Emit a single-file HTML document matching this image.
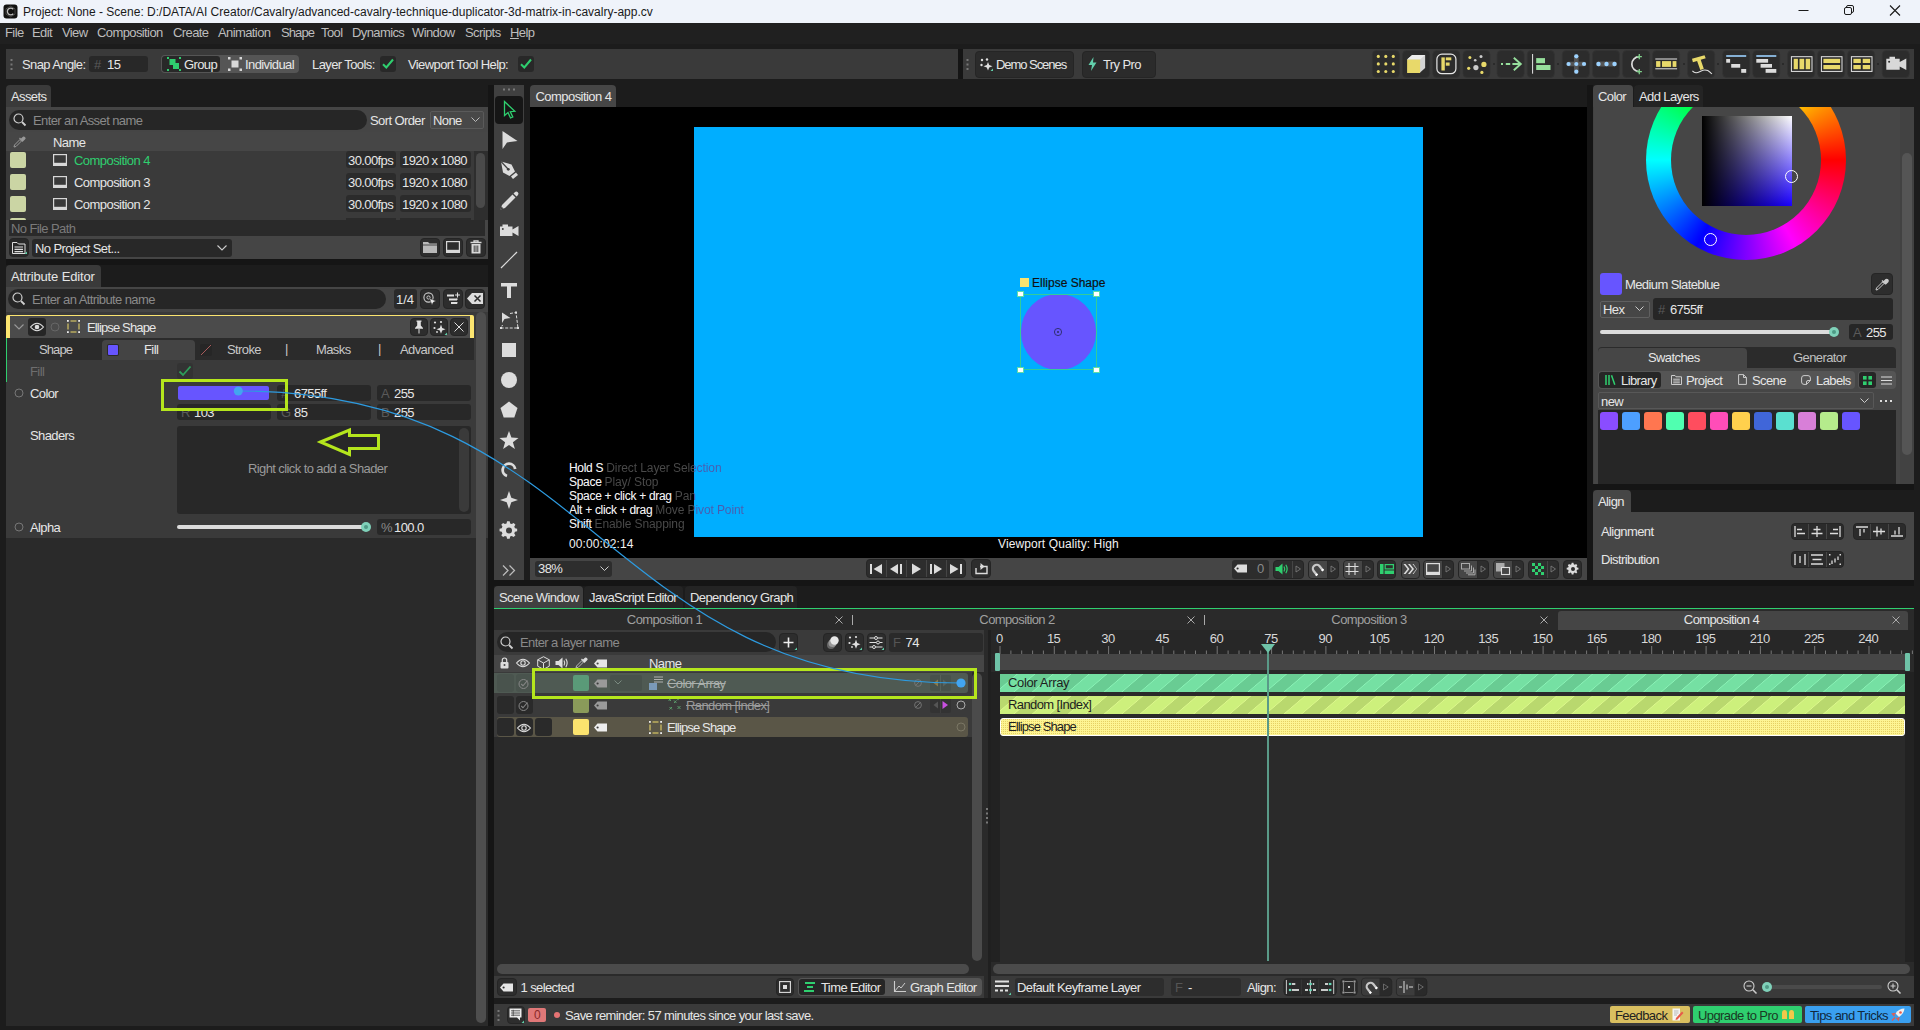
<!DOCTYPE html>
<html><head><meta charset="utf-8"><title>Cavalry</title>
<style>
*{box-sizing:border-box;margin:0;padding:0}
html,body{width:1920px;height:1030px;overflow:hidden;background:#1c1c1c}
body{font-family:"Liberation Sans",sans-serif;font-size:13px;letter-spacing:-0.6px;color:#e6e6e6;position:relative}
#app{position:absolute;left:0;top:0;width:1920px;height:1030px;overflow:hidden;background:#1c1c1c}
.a{position:absolute}
.t{position:absolute;white-space:nowrap;line-height:16px;height:16px;margin-top:1px}
.dim{color:#8a8a8a}
.grn{color:#2fcf6f}
.tab{position:absolute;background:#3a3a3a;border-radius:4px 4px 0 0;height:22px}
.tabi{position:absolute;background:#282828;border-radius:4px 4px 0 0;height:22px}
.fld{position:absolute;background:#282828;border-radius:3px}
.btn{position:absolute;background:#2b2b2b;border-radius:4px;border:1px solid #252525}
svg{position:absolute;overflow:visible}
</style></head><body><div id="app">
<div class="a" style="left:0;top:0;width:1920px;height:23px;background:#eff3fa"></div>
<svg style="left:3px;top:4px" width="15" height="15" viewBox="0 0 15 15"><rect x="0.5" y="0.5" width="14" height="14" rx="3" fill="#111"/><path d="M10.3 5.2 A3.4 3.4 0 1 0 10.3 9.8" fill="none" stroke="#bbb" stroke-width="1.3"/><path d="M7.5 2.2 L12 4.8 V10.2 L7.5 12.8 L3 10.2 V4.8 Z" fill="none" stroke="#666" stroke-width="0.6"/></svg>
<div class="t" style="left:23px;top:3px;font-size:12px;letter-spacing:0;color:#1a1a1a">Project: None - Scene: D:/DATA/AI Creator/Cavalry/advanced-cavalry-technique-duplicator-3d-matrix-in-cavalry-app.cv</div>
<svg style="left:1798px;top:5px" width="110" height="12" viewBox="0 0 110 12"><path d="M0.5 5.5 H10.5" stroke="#1a1a1a" stroke-width="1" fill="none"/><rect x="46.5" y="2.5" width="7" height="7" rx="1.5" fill="none" stroke="#1a1a1a"/><path d="M48.5 2.5 V2 Q48.5 0.5 50 0.5 H54 Q55.5 0.5 55.5 2 V6 Q55.5 7.5 54 7.5 H53.5" fill="none" stroke="#1a1a1a"/><path d="M92 0.5 L102 10.5 M102 0.5 L92 10.5" stroke="#1a1a1a" stroke-width="1.1" fill="none"/></svg>
<div class="a" style="left:488px;top:85px;width:6px;height:941px;background:#151515"></div>
<div class="a" style="left:1587px;top:85px;width:6px;height:495px;background:#151515"></div>
<div class="a" style="left:958px;top:49px;width:5px;height:30px;background:#151515"></div>
<div class="a" style="left:6px;top:259px;width:482px;height:6px;background:#151515"></div>
<div class="a" style="left:494px;top:580px;width:1420px;height:6px;background:#151515"></div>
<div class="a" style="left:1593px;top:484px;width:321px;height:6px;background:#151515"></div>

<div class="a" style="left:0;top:23px;width:1920px;height:21px;background:#202020"></div>
<div class="t" style="left:5px;top:24px;color:#bdbdbd">File</div>
<div class="t" style="left:32px;top:24px;color:#bdbdbd">Edit</div>
<div class="t" style="left:62px;top:24px;color:#bdbdbd">View</div>
<div class="t" style="left:97px;top:24px;color:#bdbdbd">Composition</div>
<div class="t" style="left:173px;top:24px;color:#bdbdbd">Create</div>
<div class="t" style="left:218px;top:24px;color:#bdbdbd">Animation</div>
<div class="t" style="left:281px;top:24px;color:#bdbdbd;letter-spacing:-0.9px">Shape</div>
<div class="t" style="left:321px;top:24px;color:#bdbdbd">Tool</div>
<div class="t" style="left:352px;top:24px;color:#bdbdbd">Dynamics</div>
<div class="t" style="left:412px;top:24px;color:#bdbdbd">Window</div>
<div class="t" style="left:465px;top:24px;color:#bdbdbd">Scripts</div>
<div class="t" style="left:510px;top:24px;color:#bdbdbd"><span style="text-decoration:underline">H</span>elp</div>

<div class="a" style="left:6px;top:49px;width:952px;height:30px;background:#3a3a3a"></div>
<div class="a" style="left:963px;top:49px;width:951px;height:30px;background:#3a3a3a"></div>
<svg style="left:10px;top:58px" width="3" height="13" viewBox="0 0 3 13"><g fill="#777"><rect x="0.5" y="1" width="2" height="2"/><rect x="0.5" y="5.5" width="2" height="2"/><rect x="0.5" y="10" width="2" height="2"/></g></svg>
<svg style="left:966px;top:58px" width="3" height="13" viewBox="0 0 3 13"><g fill="#777"><rect x="0.5" y="1" width="2" height="2"/><rect x="0.5" y="5.5" width="2" height="2"/><rect x="0.5" y="10" width="2" height="2"/></g></svg>
<div class="t" style="left:22px;top:56px">Snap Angle:</div>
<div class="fld" style="left:89px;top:56px;width:59px;height:16px"></div>
<div class="t dim" style="left:94px;top:56px;color:#5a5a5a">#</div><div class="t" style="left:107px;top:56px">15</div>
<div class="a" style="left:161px;top:55px;width:138px;height:18px;background:#555;border-radius:4px"></div>
<div class="a" style="left:162px;top:56px;width:58px;height:16px;background:#282828;border-radius:3px"></div>
<svg style="left:167px;top:57px" width="14" height="14" viewBox="0 0 14 14"><g fill="#2fcf6f"><rect x="0" y="0" width="2" height="2"/><rect x="12" y="0" width="2" height="2"/><rect x="0" y="12" width="2" height="2"/><rect x="12" y="12" width="2" height="2"/><rect x="2.5" y="2" width="6" height="6"/><rect x="6" y="6" width="6" height="6"/></g></svg>
<div class="t" style="left:184px;top:56px">Group</div>
<svg style="left:228px;top:57px" width="14" height="14" viewBox="0 0 14 14"><g fill="#d8d8d8"><rect x="0" y="0" width="2.5" height="2.5"/><rect x="11.5" y="0" width="2.5" height="2.5"/><rect x="0" y="11.5" width="2.5" height="2.5"/><rect x="11.5" y="11.5" width="2.5" height="2.5"/><rect x="3.5" y="3.5" width="7" height="7"/></g></svg>
<div class="t" style="left:245px;top:56px">Individual</div>
<div class="t" style="left:312px;top:56px">Layer Tools:</div>
<div class="fld" style="left:380px;top:56px;width:16px;height:16px"></div><svg style="left:380px;top:56px" width="16" height="16" viewBox="0 0 16 16"><path d="M3 8.2 L6.3 11.5 L13 3.5" fill="none" stroke="#2fcf6f" stroke-width="2"/></svg>
<div class="t" style="left:408px;top:56px">Viewport Tool Help:</div>
<div class="fld" style="left:518px;top:56px;width:16px;height:16px"></div><svg style="left:518px;top:56px" width="16" height="16" viewBox="0 0 16 16"><path d="M3 8.2 L6.3 11.5 L13 3.5" fill="none" stroke="#2fcf6f" stroke-width="2"/></svg>
<div class="btn" style="left:975px;top:50.5px;width:99px;height:27px"></div>
<svg style="left:980px;top:58px" width="13" height="13" viewBox="0 0 13 13"><g fill="#e0e0e0"><circle cx="2" cy="2" r="1.2"/><circle cx="7" cy="1.5" r="1.2"/><circle cx="1.5" cy="7" r="1.2"/><path d="M8 4 L9.2 7 L12.5 8.2 L9.2 9.4 L8 12.5 L6.8 9.4 L3.5 8.2 L6.8 7 Z"/></g><path d="M13 13 L10.5 13 L13 10.5Z" fill="#62d0ac"/></svg>
<div class="t" style="left:996px;top:56px;letter-spacing:-1.05px">Demo Scenes</div>
<div class="btn" style="left:1081.5px;top:50.5px;width:74px;height:27px"></div>
<svg style="left:1088px;top:57px" width="9" height="14" viewBox="0 0 9 14"><path d="M5.5 0 L0.5 8 H4 L3 14 L8.5 5.5 H5 Z" fill="#62d0ac"/></svg>
<div class="t" style="left:1103px;top:56px">Try Pro</div>
<div class="a" style="left:1492.5px;top:63px;width:2px;height:2px;background:#2a2a2a"></div>
<div class="a" style="left:1557px;top:63px;width:2px;height:2px;background:#2a2a2a"></div>
<div class="a" style="left:1682.5px;top:63px;width:2px;height:2px;background:#2a2a2a"></div>
<div class="a" style="left:1717px;top:63px;width:2px;height:2px;background:#2a2a2a"></div>
<div class="a" style="left:1782px;top:63px;width:2px;height:2px;background:#2a2a2a"></div>
<div class="a" style="left:1877px;top:63px;width:2px;height:2px;background:#2a2a2a"></div>
<svg style="left:0;top:0" width="1920" height="90" viewBox="0 0 1920 90"><g transform="translate(1372.4 50.5)"><rect x="0" y="0" width="27" height="27" rx="4" fill="#2c2c2c" stroke="#343434" stroke-width="0.8"/><g fill="#e8d96a"><circle cx="5.9" cy="5.9" r="1.55"/><circle cx="5.9" cy="13.4" r="1.55"/><circle cx="5.9" cy="21.0" r="1.55"/><circle cx="13.4" cy="5.9" r="1.55"/><circle cx="13.4" cy="13.4" r="1.55"/><circle cx="13.4" cy="21.0" r="1.55"/><circle cx="20.9" cy="5.9" r="1.55"/><circle cx="20.9" cy="13.4" r="1.55"/><circle cx="20.9" cy="21.0" r="1.55"/></g></g><g transform="translate(1402.6 50.5)"><rect x="0" y="0" width="27" height="27" rx="4" fill="#2c2c2c" stroke="#343434" stroke-width="0.8"/><path d="M4.5 9.100000000000001 l5 -4.7 h13 v13 l-5 4.7 Z" fill="#d4d4d4"/><path d="M4.5 9.100000000000001 l5 -4.7 h13 l-5 4.7 Z" fill="#ececec"/><rect x="4.5" y="9.100000000000001" width="13" height="13.4" fill="#e8d96a"/></g><g transform="translate(1432.8 50.5)"><rect x="0" y="0" width="27" height="27" rx="4" fill="#2c2c2c" stroke="#343434" stroke-width="0.8"/><rect x="4.1" y="3.6" width="19" height="19.6" rx="5" fill="none" stroke="#e6e6e6" stroke-width="1.2"/><rect x="8.6" y="6.9" width="3.4" height="13.1" fill="#e8d96a"/><rect x="13.0" y="6.9" width="5.5" height="2.9" fill="#e8d96a"/><rect x="13.0" y="12" width="3.8" height="3.2" fill="#e8d96a"/></g><g transform="translate(1463 50.5)"><rect x="0" y="0" width="27" height="27" rx="4" fill="#2c2c2c" stroke="#343434" stroke-width="0.8"/><circle cx="6.9" cy="6.9" r="1.5" fill="#e8d96a"/><circle cx="18.0" cy="5.9" r="1.5" fill="#ccc"/><circle cx="12.2" cy="9.8" r="1.3" fill="#ccc"/><circle cx="20.9" cy="13.9" r="2.6" fill="#e8d96a"/><circle cx="12.9" cy="17.1" r="2.6" fill="#ccc"/><circle cx="5.7" cy="17.8" r="1.6" fill="#e8d96a"/><circle cx="18.9" cy="21.9" r="1.6" fill="#e8d96a"/></g><g transform="translate(1497.1 50.5)"><rect x="0" y="0" width="27" height="27" rx="4" fill="#2c2c2c" stroke="#343434" stroke-width="0.8"/><path d="M3.9 13.5 h2 M8.7 13.5 h4.4 M15.3 13.5 H23.2" stroke="#96df9c" stroke-width="1.9" fill="none"/><path d="M16.7 7.3 L23.7 13.5 L16.7 19.7" fill="none" stroke="#96df9c" stroke-width="1.9"/></g><g transform="translate(1527.3 50.5)"><rect x="0" y="0" width="27" height="27" rx="4" fill="#2c2c2c" stroke="#343434" stroke-width="0.8"/><path d="M5.3 3.5 V23.2" stroke="#e6e6e6" stroke-width="1"/><rect x="8.9" y="7.6" width="8.8" height="5.1" fill="#96df9c"/><rect x="8.9" y="14.5" width="14.3" height="5" fill="#96df9c"/></g><g transform="translate(1562.3 50.5)"><rect x="0" y="0" width="27" height="27" rx="4" fill="#2c2c2c" stroke="#343434" stroke-width="0.8"/><path d="M6.3 13.5 H21.7 M14 5.8 V21.2" stroke="#555" stroke-width="4.6" stroke-linecap="round"/><g fill="#9cd2ff"><circle cx="14" cy="13.5" r="2.1"/><circle cx="6.3" cy="13.5" r="2.1"/><circle cx="21.7" cy="13.5" r="2.1"/><circle cx="14" cy="5.8" r="2.1"/><circle cx="14" cy="21.2" r="2.1"/></g></g><g transform="translate(1592.5 50.5)"><rect x="0" y="0" width="27" height="27" rx="4" fill="#2c2c2c" stroke="#343434" stroke-width="0.8"/><path d="M6 13.5 H22" stroke="#555" stroke-width="4.8" stroke-linecap="round"/><g fill="#9cd2ff"><circle cx="6" cy="13.5" r="2.2"/><circle cx="14" cy="13.5" r="2.2"/><circle cx="22" cy="13.5" r="2.2"/></g></g><g transform="translate(1622.6 50.5)"><rect x="0" y="0" width="27" height="27" rx="4" fill="#2c2c2c" stroke="#343434" stroke-width="0.8"/><path d="M16.700000000000045 6.2 A7.45 7.45 0 0 0 16.700000000000045 21.1" fill="none" stroke="#dcdcdc" stroke-width="1.7"/><path d="M14.100000000000046 6.2 h5.2 M16.700000000000045 3.6 v5.2 M14.100000000000046 21.1 h5.2 M16.700000000000045 18.5 v5.2" stroke="#7fd08a" stroke-width="1.3"/></g><g transform="translate(1652.6 50.5)"><rect x="0" y="0" width="27" height="27" rx="4" fill="#2c2c2c" stroke="#343434" stroke-width="0.8"/><path d="M2.7 8.5 H24.5 M2.7 18.3 H24.5" stroke="#e6e6e6" stroke-width="1"/><rect x="3.5" y="10.6" width="4.3" height="5.8" fill="#e8d96a"/><rect x="9.4" y="10.6" width="9.1" height="5.8" fill="#e8d96a"/><rect x="20.0" y="10.6" width="3.8" height="5.8" fill="#e8d96a"/></g><g transform="translate(1687.6 50.5)"><rect x="0" y="0" width="27" height="27" rx="4" fill="#2c2c2c" stroke="#343434" stroke-width="0.8"/><path d="M4.4 8.2 L16.9 4.7 L18.1 7.8 L13.1 9.3 L16.2 18.2 L12.7 19.5 L9.5 10.4 L5.3 11.7 Z" fill="#e8d96a"/><path d="M4.8 20.3 C8.8 25.0 12.7 19.5 17.3 19.5 S22.0 21.8 24.4 23.4" fill="none" stroke="#e0e0e0" stroke-width="1.1"/></g><g transform="translate(1722.7 50.5)"><rect x="0" y="0" width="27" height="27" rx="4" fill="#2c2c2c" stroke="#343434" stroke-width="0.8"/><rect x="3.5" y="4.7" width="20" height="1.6" fill="#9cd2ff"/><rect x="3.5" y="8.5" width="3.9" height="3.7" fill="#dcdcdc"/><rect x="8.5" y="13.5" width="9" height="3.7" fill="#dcdcdc"/><rect x="18.5" y="18.5" width="5" height="3.8" fill="#dcdcdc"/></g><g transform="translate(1752.8 50.5)"><rect x="0" y="0" width="27" height="27" rx="4" fill="#2c2c2c" stroke="#343434" stroke-width="0.8"/><rect x="3.5" y="4.7" width="20" height="1.6" fill="#9cd2ff"/><rect x="3.5" y="8.5" width="11.8" height="3.7" fill="#dcdcdc"/><rect x="7.8" y="13.5" width="11.4" height="3.7" fill="#dcdcdc"/><rect x="12.8" y="18.5" width="10.7" height="3.8" fill="#dcdcdc"/></g><g transform="translate(1787.6 50.5)"><rect x="0" y="0" width="27" height="27" rx="4" fill="#2c2c2c" stroke="#343434" stroke-width="0.8"/><rect x="3.8" y="6.2" width="20.6" height="14.7" fill="none" stroke="#e6e6e6" stroke-width="1"/><rect x="6.1" y="8.3" width="4.2" height="10.4" fill="#e8d96a"/><rect x="11.9" y="8.3" width="4.7" height="10.4" fill="#e8d96a"/><rect x="18.1" y="8.3" width="4.4" height="10.4" fill="#e8d96a"/></g><g transform="translate(1817.6 50.5)"><rect x="0" y="0" width="27" height="27" rx="4" fill="#2c2c2c" stroke="#343434" stroke-width="0.8"/><rect x="3.8" y="6.2" width="20.6" height="14.7" fill="none" stroke="#e6e6e6" stroke-width="1"/><rect x="5.8" y="8.3" width="16.7" height="4.2" fill="#e8d96a"/><rect x="5.8" y="14.5" width="16.7" height="4.2" fill="#e8d96a"/></g><g transform="translate(1847.6 50.5)"><rect x="0" y="0" width="27" height="27" rx="4" fill="#2c2c2c" stroke="#343434" stroke-width="0.8"/><rect x="3.8" y="6.2" width="20.6" height="14.7" fill="none" stroke="#e6e6e6" stroke-width="1"/><rect x="5.8" y="8.3" width="7.4" height="4.2" fill="#e8d96a"/><rect x="5.8" y="14.5" width="7.4" height="4.2" fill="#e8d96a"/><rect x="15.1" y="8.3" width="7.4" height="4.2" fill="#e8d96a"/><rect x="15.1" y="14.5" width="7.4" height="4.2" fill="#e8d96a"/></g><g transform="translate(1882.3 50.5)"><rect x="0" y="0" width="27" height="27" rx="4" fill="#2c2c2c" stroke="#343434" stroke-width="0.8"/><path d="M4.0 8.3 H7.2 V6.2 H12.7 V8.3 H17.4 V11.5 L24.0 8 V19.5 L17.4 16 V19.2 H4.0 Z" fill="#d8d8d8"/><circle cx="6.8" cy="11.2" r="1" fill="#2d2d2d"/></g></svg>

<div class="tab" style="left:6px;top:85px;width:45px"></div><div class="t" style="left:11px;top:88px">Assets</div>
<div class="a" style="left:6px;top:107px;width:482px;height:152px;background:#454545"></div>
<div class="a" style="left:9px;top:110px;width:358px;height:20px;background:#262626;border-radius:10px"></div>
<svg style="left:13px;top:113px" width="13" height="13" viewBox="0 0 13 13"><circle cx="5.5" cy="5.5" r="4.5" fill="none" stroke="#d0d0d0" stroke-width="1.2"/><path d="M9 9 L12.5 12.5" stroke="#d0d0d0" stroke-width="1.8"/></svg>
<div class="t dim" style="left:33px;top:112px">Enter an Asset name</div>
<div class="t" style="left:370px;top:112px">Sort Order</div>
<div class="a" style="left:430px;top:111px;width:54px;height:18px;background:#484848;border:1px solid #5a5a5a;border-radius:2px"></div>
<div class="t" style="left:433px;top:112px">None</div>
<svg style="left:471px;top:117px" width="9" height="6" viewBox="0 0 9 6"><path d="M0.5 0.5 L4.5 4.5 L8.5 0.5" fill="none" stroke="#bbb" stroke-width="1"/></svg>
<div class="a" style="left:6px;top:132px;width:482px;height:19px;background:#464646"></div>
<svg style="left:13px;top:135px" width="13" height="13" viewBox="0 0 13 13"><path d="M1 12 L1.5 10 L7 4.5 L8.5 6 L3 11.5 Z" fill="none" stroke="#999" stroke-width="1"/><path d="M6.5 3 L10 6.5 M8 4.5 L10.5 2 A1.5 1.5 0 0 1 12 3.5 L9.5 6" fill="#999" stroke="#999" stroke-width="1.2"/></svg>
<div class="t" style="left:53px;top:134px">Name</div>
<div class="a" style="left:6px;top:151px;width:482px;height:69px;background:#3a3a3a"></div><div class="a" style="left:474px;top:151px;width:14px;height:69px;background:#2e2e2e"></div>
<div class="a" style="left:10px;top:152px;width:16px;height:16px;background:#cbd5a4;border-radius:2px"></div>
<svg style="left:53px;top:154px" width="14" height="12" viewBox="0 0 14 12"><rect x="0.6" y="0.6" width="12.8" height="8.8" fill="none" stroke="#d8d8d8" stroke-width="1.2"/><rect x="0" y="9.5" width="14" height="2.5" fill="#d8d8d8"/></svg>
<div class="t" style="left:74px;top:152px;color:#2fcf6f;letter-spacing:-0.55px">Composition 4</div>
<div class="fld" style="left:346px;top:151px;width:50px;height:17px;background:#2b2b2b"></div><div class="t" style="left:348px;top:152px">30.00fps</div>
<div class="fld" style="left:400px;top:151px;width:71px;height:17px;background:#2b2b2b"></div><div class="t" style="left:402px;top:152px">1920 x 1080</div>
<div class="a" style="left:10px;top:174px;width:16px;height:16px;background:#cbd5a4;border-radius:2px"></div>
<svg style="left:53px;top:176px" width="14" height="12" viewBox="0 0 14 12"><rect x="0.6" y="0.6" width="12.8" height="8.8" fill="none" stroke="#d8d8d8" stroke-width="1.2"/><rect x="0" y="9.5" width="14" height="2.5" fill="#d8d8d8"/></svg>
<div class="t" style="left:74px;top:174px;color:#e6e6e6;letter-spacing:-0.55px">Composition 3</div>
<div class="fld" style="left:346px;top:173px;width:50px;height:17px;background:#2b2b2b"></div><div class="t" style="left:348px;top:174px">30.00fps</div>
<div class="fld" style="left:400px;top:173px;width:71px;height:17px;background:#2b2b2b"></div><div class="t" style="left:402px;top:174px">1920 x 1080</div>
<div class="a" style="left:10px;top:196px;width:16px;height:16px;background:#cbd5a4;border-radius:2px"></div>
<svg style="left:53px;top:198px" width="14" height="12" viewBox="0 0 14 12"><rect x="0.6" y="0.6" width="12.8" height="8.8" fill="none" stroke="#d8d8d8" stroke-width="1.2"/><rect x="0" y="9.5" width="14" height="2.5" fill="#d8d8d8"/></svg>
<div class="t" style="left:74px;top:196px;color:#e6e6e6;letter-spacing:-0.55px">Composition 2</div>
<div class="fld" style="left:346px;top:195px;width:50px;height:17px;background:#2b2b2b"></div><div class="t" style="left:348px;top:196px">30.00fps</div>
<div class="fld" style="left:400px;top:195px;width:71px;height:17px;background:#2b2b2b"></div><div class="t" style="left:402px;top:196px">1920 x 1080</div>
<div class="a" style="left:10px;top:218px;width:16px;height:2px;background:#cbd5a4;border-radius:2px 2px 0 0"></div>
<div class="a" style="left:346px;top:218px;width:50px;height:2px;background:#2b2b2b"></div><div class="a" style="left:400px;top:218px;width:71px;height:2px;background:#2b2b2b"></div>
<div class="a" style="left:476px;top:153px;width:9px;height:55px;background:#4a4a4a;border-radius:5px"></div>
<div class="a" style="left:9px;top:220px;width:476px;height:16px;background:#2a2a2a"></div>
<div class="t" style="left:11px;top:220px;color:#7a7a7a">No File Path</div>
<div class="btn" style="left:9px;top:238px;width:20px;height:19px;background:#282828"></div>
<svg style="left:12px;top:241px" width="15" height="13" viewBox="0 0 15 13"><path d="M0.5 12.5 V1.5 H5 L6.5 3 H13 V12.5 Z" fill="none" stroke="#ddd" stroke-width="1"/><path d="M2.5 6 H11 M2.5 8.3 H11 M2.5 10.6 H11" stroke="#ddd" stroke-width="1.2"/><path d="M15 13 L12.5 13 L15 10.5Z" fill="#5fcfa8"/></svg>
<div class="fld" style="left:32px;top:239px;width:200px;height:18px"></div><div class="t" style="left:35px;top:240px">No Project Set...</div>
<svg style="left:217px;top:245px" width="10" height="6" viewBox="0 0 10 6"><path d="M0.5 0.5 L5 5 L9.5 0.5" fill="none" stroke="#ccc" stroke-width="1.1"/></svg>
<div class="btn" style="left:420px;top:238px;width:20px;height:19px;background:#2d2d2d"></div>
<div class="btn" style="left:443px;top:238px;width:20px;height:19px;background:#2d2d2d"></div>
<div class="btn" style="left:466px;top:238px;width:20px;height:19px;background:#2d2d2d"></div>
<svg style="left:423px;top:241px" width="14" height="12" viewBox="0 0 14 12"><path d="M0 12 V1 H5 L6.5 2.5 H14 V12 Z" fill="#b8b8b8"/><path d="M0 4 H14" stroke="#2d2d2d" stroke-width="0.8"/></svg>
<svg style="left:446px;top:241px" width="14" height="12" viewBox="0 0 14 12"><rect x="0.6" y="0.6" width="12.8" height="8.8" fill="none" stroke="#d8d8d8" stroke-width="1.2"/><rect x="0" y="9.5" width="14" height="2.5" fill="#d8d8d8"/></svg>
<svg style="left:470px;top:240px" width="12" height="14" viewBox="0 0 12 14"><path d="M0.5 2.5 H11.5 M4 2.5 V0.8 H8 V2.5" fill="none" stroke="#d8d8d8" stroke-width="1.3"/><path d="M1.5 4 H10.5 V13.5 H1.5 Z" fill="#d8d8d8"/><path d="M4.2 5.5 V12 M6 5.5 V12 M7.8 5.5 V12" stroke="#2d2d2d" stroke-width="0.9"/></svg>
<div class="tab" style="left:6px;top:265px;width:95px"></div><div class="t" style="left:11px;top:268px;letter-spacing:-0.14px">Attribute Editor</div>
<div class="a" style="left:6px;top:287px;width:482px;height:251px;background:#3a3a3a"></div><div class="a" style="left:6px;top:287px;width:482px;height:25px;background:#454545"></div>
<div class="a" style="left:6px;top:538px;width:482px;height:488px;background:#2a2a2a"></div>
<div class="a" style="left:8px;top:289px;width:378px;height:20px;background:#262626;border-radius:10px"></div>
<svg style="left:12px;top:292px" width="13" height="13" viewBox="0 0 13 13"><circle cx="5.5" cy="5.5" r="4.5" fill="none" stroke="#d0d0d0" stroke-width="1.2"/><path d="M9 9 L12.5 12.5" stroke="#d0d0d0" stroke-width="1.8"/></svg>
<div class="t dim" style="left:32px;top:291px">Enter an Attribute name</div>
<div class="fld" style="left:394px;top:289px;width:23px;height:20px;background:#2a2a2a"></div><div class="t" style="left:396px;top:291px;letter-spacing:0">1/4</div>
<div class="btn" style="left:420px;top:289px;width:20px;height:20px;background:#2d2d2d"></div>
<div class="btn" style="left:443px;top:289px;width:20px;height:20px;background:#2d2d2d"></div>
<div class="btn" style="left:465px;top:289px;width:20px;height:20px;background:#2d2d2d"></div>
<svg style="left:423px;top:292px" width="14" height="14" viewBox="0 0 14 14"><circle cx="5.5" cy="5.5" r="4.6" fill="none" stroke="#ccc" stroke-width="1.1"/><circle cx="5.5" cy="5.5" r="1.6" fill="none" stroke="#ccc" stroke-width="1"/><path d="M6.5 6.5 L13 9 L10.3 10.3 L9 13 Z" fill="#eee" stroke="#2d2d2d" stroke-width="0.5"/></svg>
<svg style="left:446px;top:292px" width="14" height="13" viewBox="0 0 14 13"><path d="M1 3.5 H8 M3 7.5 H11 M5 11 H11" stroke="#e0e0e0" stroke-width="1.8"/><path d="M11.5 0.5 V5.5 M9 3 H14" stroke="#e0e0e0" stroke-width="1.1"/><path d="M11 6.5 V8 M11 10 V11.5" stroke="#e0e0e0" stroke-width="1"/></svg>
<svg style="left:467px;top:293px" width="16" height="11" viewBox="0 0 16 11"><path d="M0 5.5 L5 0 H16 V11 H5 Z" fill="#ddd"/><path d="M7.5 2.5 L13.5 8.5 M13.5 2.5 L7.5 8.5" stroke="#2d2d2d" stroke-width="1.5"/></svg>
<div class="a" style="left:476px;top:312px;width:10px;height:711px;background:#4e4e4e;border-radius:5px"></div>
<div class="a" style="left:6px;top:315px;width:468px;height:23px;background:#4b4b4b;border-left:4px solid #fce570;border-right:4px solid #fce570;border-top:1px solid #fce570;border-radius:2px 2px 0 0"></div>
<svg style="left:14px;top:324px" width="10" height="6" viewBox="0 0 10 6"><path d="M0.5 0.5 L5 5 L9.5 0.5" fill="none" stroke="#999" stroke-width="1.1"/></svg>
<div class="a" style="left:28px;top:318px;width:18px;height:18px;background:#262626;border-radius:3px"></div>
<svg style="left:30px;top:322px" width="14" height="10" viewBox="0 0 14 10"><path d="M0.5 5 Q7 -2.5 13.5 5 Q7 12.5 0.5 5 Z" fill="none" stroke="#ddd" stroke-width="1.1"/><circle cx="7" cy="5" r="2.3" fill="#ddd"/></svg>
<svg style="left:50px;top:322px" width="10" height="10" viewBox="0 0 10 10"><circle cx="5" cy="5" r="4" fill="none" stroke="#666" stroke-width="1"/></svg>
<svg style="left:67px;top:320px" width="13" height="13" viewBox="0 0 13 13"><path d="M3.5 1 H9.5 M3.5 12 H9.5 M1 3.5 V9.5 M12 3.5 V9.5" stroke="#f0dc6a" stroke-width="1" fill="none"/><g fill="#ececec"><rect x="0" y="0" width="1.8" height="1.8"/><rect x="11.2" y="0" width="1.8" height="1.8"/><rect x="0" y="11.2" width="1.8" height="1.8"/><rect x="11.2" y="11.2" width="1.8" height="1.8"/></g></svg>
<div class="t" style="left:87px;top:319px;letter-spacing:-0.85px">Ellipse Shape</div>
<div class="btn" style="left:410px;top:318px;width:18px;height:18px;background:#2d2d2d"></div>
<div class="btn" style="left:430px;top:318px;width:18px;height:18px;background:#2d2d2d"></div>
<div class="btn" style="left:450px;top:318px;width:18px;height:18px;background:#2d2d2d"></div>
<svg style="left:414px;top:320px" width="10" height="14" viewBox="0 0 10 14"><path d="M2.5 0.5 H7.5 V1.8 H6.8 V5.5 L9 8 V8.8 H1 V8 L3.2 5.5 V1.8 H2.5 Z" fill="#e0e0e0"/><path d="M5 8.8 V13.5" stroke="#e0e0e0" stroke-width="1"/></svg>
<svg style="left:432px;top:320px" width="15" height="15" viewBox="0 0 15 15"><g fill="#e0e0e0"><circle cx="3" cy="2.5" r="1.1"/><circle cx="9" cy="2" r="1.1"/><circle cx="2.5" cy="8" r="1.1"/><circle cx="5" cy="12" r="0.9"/><path d="M9 4.5 L10.2 8 L13.5 9.2 L10.2 10.4 L9 13.8 L7.8 10.4 L4.5 9.2 L7.8 8 Z"/></g><path d="M15 15 L12.5 15 L15 12.5Z" fill="#5fcfa8"/></svg>
<svg style="left:454px;top:322px" width="10" height="10" viewBox="0 0 10 10"><path d="M0.5 0.5 L9.5 9.5 M9.5 0.5 L0.5 9.5" stroke="#ddd" stroke-width="1"/></svg>
<div class="a" style="left:6px;top:338px;width:468px;height:22px;background:#2b2b2b"></div>
<div class="a" style="left:6px;top:338px;width:1px;height:44px;background:#2fcf6f"></div>
<div class="a" style="left:102px;top:340px;width:93px;height:20px;background:#444;border-radius:4px 4px 0 0"></div>
<div class="t" style="left:39px;top:341px;color:#c8c8c8;letter-spacing:-0.9px">Shape</div>
<div class="a" style="left:107px;top:344px;width:12px;height:12px;background:#2a2a2a;border-radius:2px"></div><div class="a" style="left:108px;top:345px;width:10px;height:10px;background:#6755ff;border-radius:1px"></div>
<div class="t" style="left:144px;top:341px">Fill</div>
<div class="a" style="left:200px;top:344px;width:12px;height:12px;background:#262626;border-radius:2px"></div><svg style="left:200px;top:344px" width="12" height="12" viewBox="0 0 12 12"><path d="M1 11 L11 1" stroke="#a85a5a" stroke-width="1"/></svg>
<div class="t" style="left:227px;top:341px;color:#c8c8c8">Stroke</div>
<div class="t" style="left:285px;top:340px;color:#c8c8c8">|</div>
<div class="t" style="left:316px;top:341px;color:#c8c8c8">Masks</div>
<div class="t" style="left:378px;top:340px;color:#c8c8c8">|</div>
<div class="t" style="left:400px;top:341px;color:#c8c8c8">Advanced</div>
<div class="t" style="left:30px;top:363px;color:#6e6e6e">Fill</div>
<div class="fld" style="left:177px;top:363px;width:16px;height:16px;background:#333"></div><svg style="left:177px;top:363px" width="16" height="16" viewBox="0 0 16 16"><path d="M2.5 8.5 L6 12 L13.5 3.5" fill="none" stroke="#2e9e5a" stroke-width="1.8"/></svg>
<svg style="left:14px;top:388px" width="10" height="10" viewBox="0 0 10 10"><circle cx="5" cy="5" r="4" fill="none" stroke="#777" stroke-width="1"/></svg>
<div class="t" style="left:30px;top:385px">Color</div>
<div class="a" style="left:178px;top:386px;width:91px;height:14px;background:#6755ff;border-radius:2px"></div>
<div class="fld" style="left:277px;top:385px;width:94px;height:16px"></div><div class="t" style="left:281px;top:385px;color:#5a5a5a">#</div><div class="t" style="left:294px;top:385px">6755ff</div>
<div class="fld" style="left:377px;top:385px;width:94px;height:16px"></div><div class="t" style="left:381px;top:385px;color:#5a5a5a">A</div><div class="t" style="left:394px;top:385px">255</div>
<div class="fld" style="left:177px;top:404px;width:94px;height:16px"></div><div class="t" style="left:181px;top:404px;color:#5a5a5a">R</div><div class="t" style="left:194px;top:404px">103</div>
<div class="fld" style="left:277px;top:404px;width:94px;height:16px"></div><div class="t" style="left:281px;top:404px;color:#5a5a5a">G</div><div class="t" style="left:294px;top:404px">85</div>
<div class="fld" style="left:377px;top:404px;width:94px;height:16px"></div><div class="t" style="left:381px;top:404px;color:#5a5a5a">B</div><div class="t" style="left:394px;top:404px">255</div>
<div class="t" style="left:30px;top:427px">Shaders</div>
<div class="fld" style="left:177px;top:426px;width:294px;height:88px"></div>
<div class="a" style="left:459px;top:428px;width:10px;height:84px;background:#3a3a3a;border-radius:5px"></div>
<div class="t" style="left:248px;top:460px;color:#9a9a9a">Right click to add a Shader</div>
<svg style="left:14px;top:522px" width="10" height="10" viewBox="0 0 10 10"><circle cx="5" cy="5" r="4" fill="none" stroke="#777" stroke-width="1"/></svg>
<div class="t" style="left:30px;top:519px">Alpha</div>
<div class="a" style="left:177px;top:525px;width:189px;height:4px;background:#dcdcdc;border-radius:2px"></div>
<div class="a" style="left:361px;top:522px;width:10px;height:10px;background:#7fd1b9;border-radius:5px"></div><div class="a" style="left:364px;top:525px;width:4px;height:4px;background:#4f9a86;border-radius:2px"></div>
<div class="fld" style="left:377px;top:519px;width:94px;height:16px"></div><div class="t" style="left:381px;top:519px;color:#888">%</div><div class="t" style="left:394px;top:519px">100.0</div>

<div class="a" style="left:494px;top:85px;width:30px;height:495px;background:#404040"></div>
<svg style="left:502px;top:88px" width="14" height="3" viewBox="0 0 14 3"><g fill="#7a7a7a"><rect x="1" y="0.5" width="2" height="2"/><rect x="6" y="0.5" width="2" height="2"/><rect x="11" y="0.5" width="2" height="2"/></g></svg>
<div class="a" style="left:495px;top:96px;width:28px;height:28px;background:#161616;border-radius:4px"></div>
<svg style="left:499.0px;top:100.0px" width="20" height="20" viewBox="0 0 20 20"><path d="M5.5 1.5 V15.5 L9 12.5 L11.5 18 L13.8 17 L11.3 11.7 L15.8 11.3 Z" fill="none" stroke="#2fcf6f" stroke-width="1.3" stroke-linejoin="miter"/></svg>
<svg style="left:499.0px;top:130.0px" width="20" height="20" viewBox="0 0 20 20"><path d="M3.5 1 L18.5 11 L8 12.5 L3.5 19 Z" fill="#dcdcdc"/></svg>
<svg style="left:499.0px;top:160.0px" width="20" height="20" viewBox="0 0 20 20"><path d="M2 1.5 L12.5 4.5 L16 11.5 L10.5 16 L4 12.5 Z" fill="#dcdcdc"/><path d="M2 1.5 L9 9" stroke="#404040" stroke-width="1.2"/><circle cx="9.3" cy="9.3" r="1.4" fill="#404040"/><path d="M12 16.5 L17 12.5 L19 15 L14 19 Z" fill="#dcdcdc"/></svg>
<svg style="left:499.0px;top:190.0px" width="20" height="20" viewBox="0 0 20 20"><path d="M3 15 L13.5 4.5 L16.5 7.5 L6 18 L1.5 19.5 Z" fill="#dcdcdc"/><path d="M14.5 3.5 L15.8 2.2 A1.6 1.6 0 0 1 18.8 5.2 L17.5 6.5 Z" fill="#dcdcdc"/><path d="M1.5 19.5 L2.5 16.5 L4.5 18.5Z" fill="#404040"/></svg>
<svg style="left:499.0px;top:220.0px" width="20" height="20" viewBox="0 0 20 20"><path d="M1 6.5 H3.5 V4.5 H9 V6.5 H13.5 V9.5 L19.5 6 V16 L13.5 12.5 V16 H1 Z" fill="#dcdcdc"/><circle cx="3.8" cy="9" r="1" fill="#404040"/></svg>
<svg style="left:499.0px;top:250.0px" width="20" height="20" viewBox="0 0 20 20"><path d="M2 18 L18 2" stroke="#dcdcdc" stroke-width="1.2"/></svg>
<svg style="left:499.0px;top:280.0px" width="20" height="20" viewBox="0 0 20 20"><path d="M2 3 H18 V6.5 H12 V18 H8 V6.5 H2 Z" fill="#dcdcdc"/></svg>
<svg style="left:499.0px;top:310.0px" width="20" height="20" viewBox="0 0 20 20"><path d="M3 2.5 L11.5 8 L5.5 9 L3 13 Z" fill="#dcdcdc"/><path d="M11 3.5 L17 2.5 L19 18 L2 18 L3.5 15" fill="none" stroke="#dcdcdc" stroke-width="1" stroke-dasharray="3 1.5"/><g fill="#dcdcdc"><rect x="16" y="1.5" width="2" height="2"/><rect x="18" y="17" width="2" height="2"/><rect x="1" y="17" width="2" height="2"/></g></svg>
<svg style="left:499.0px;top:340.0px" width="20" height="20" viewBox="0 0 20 20"><rect x="3" y="3" width="14" height="14" fill="#dcdcdc"/></svg>
<svg style="left:499.0px;top:370.0px" width="20" height="20" viewBox="0 0 20 20"><circle cx="10" cy="10" r="8" fill="#dcdcdc"/></svg>
<svg style="left:499.0px;top:400.0px" width="20" height="20" viewBox="0 0 20 20"><path d="M10 1.5 L18.5 8 L15.3 17.5 H4.7 L1.5 8 Z" fill="#dcdcdc"/></svg>
<svg style="left:499.0px;top:430.0px" width="20" height="20" viewBox="0 0 20 20"><path d="M10 1 L12.4 7.6 L19.5 7.9 L13.9 12.3 L15.9 19 L10 15.1 L4.1 19 L6.1 12.3 L0.5 7.9 L7.6 7.6 Z" fill="#dcdcdc"/></svg>
<svg style="left:499.0px;top:460.0px" width="20" height="20" viewBox="0 0 20 20"><path d="M8 16 A6.3 6.3 0 1 1 16.2 9" fill="none" stroke="#dcdcdc" stroke-width="2.8"/></svg>
<svg style="left:499.0px;top:490.0px" width="20" height="20" viewBox="0 0 20 20"><path d="M10 1 L12.3 7.7 L19 10 L12.3 12.3 L10 19 L7.7 12.3 L1 10 L7.7 7.7 Z" fill="#dcdcdc"/></svg>
<svg style="left:499.0px;top:520.0px" width="20" height="20" viewBox="0 0 20 20"><path d="M10 1.5 l1.3 0 l.5 2.2 l1.6 .7 l1.9-1.2 l1.8 1.8 l-1.2 1.9 l.7 1.6 l2.2 .5 l0 2.6 l-2.2 .5 l-.7 1.6 l1.2 1.9 l-1.8 1.8 l-1.9-1.2 l-1.6 .7 l-.5 2.2 l-2.6 0 l-.5-2.2 l-1.6-.7 l-1.9 1.2 l-1.8-1.8 l1.2-1.9 l-.7-1.6 l-2.2-.5 l0-2.6 l2.2-.5 l.7-1.6 l-1.2-1.9 l1.8-1.8 l1.9 1.2 l1.6-.7 l.5-2.2 Z" fill="#dcdcdc" transform="translate(-0.65 -0.3)"/><circle cx="10" cy="10.5" r="3" fill="#404040"/></svg>
<svg style="left:502px;top:565px" width="14" height="11" viewBox="0 0 14 11"><path d="M1 0.5 L6 5.5 L1 10.5 M7.5 0.5 L12.5 5.5 L7.5 10.5" fill="none" stroke="#bdbdbd" stroke-width="1.2"/></svg>

<div class="tab" style="left:530px;top:85px;width:86px;background:#464646"></div><div class="t" style="left:535.5px;top:88px;letter-spacing:-0.55px">Composition 4</div>
<div class="a" style="left:530px;top:107px;width:1057px;height:451px;background:#000"></div>
<div class="a" style="left:693.5px;top:127px;width:729px;height:410px;background:#00aeff"></div>
<div class="a" style="left:1020.5px;top:294px;width:75.5px;height:75.5px;border-radius:50%;background:#6755ff"></div>
<div class="a" style="left:1020px;top:293.5px;width:76.5px;height:76.5px;border:1.3px solid #33cc99"></div>
<div class="a" style="left:1017px;top:290.7px;width:6.6px;height:6.6px;background:#fff;border:1px solid #5fdcaa"></div>
<div class="a" style="left:1093px;top:290.7px;width:6.6px;height:6.6px;background:#fff;border:1px solid #5fdcaa"></div>
<div class="a" style="left:1017px;top:366.7px;width:6.6px;height:6.6px;background:#fff;border:1px solid #5fdcaa"></div>
<div class="a" style="left:1093px;top:366.7px;width:6.6px;height:6.6px;background:#fff;border:1px solid #5fdcaa"></div>
<svg style="left:1053px;top:327px" width="10" height="10" viewBox="0 0 10 10"><circle cx="5" cy="5" r="3.6" fill="none" stroke="#2b2b66" stroke-width="0.9"/><circle cx="5" cy="5" r="1" fill="#2b2b66"/></svg>
<div class="a" style="left:1020px;top:278px;width:9px;height:9px;background:#fbe36e"></div>
<div class="t" style="left:1032px;top:274px;font-size:12px;letter-spacing:0;color:#111;-webkit-text-stroke:0.2px #111">Ellipse Shape</div>
<div class="t" style="left:569px;top:459px;font-size:12px;letter-spacing:-0.3px;color:#f2f2f2;background:linear-gradient(90deg,#4a4a4a 0,#4a4a4a 125px,#4a5cae 125px);-webkit-background-clip:text;background-clip:text"><span style="-webkit-text-fill-color:#f2f2f2">Hold S</span> <span style="-webkit-text-fill-color:transparent;letter-spacing:-0.1px">Direct Layer Selection</span></div>
<div class="t" style="left:569px;top:473px;font-size:12px;letter-spacing:-0.3px;color:#f2f2f2;background:linear-gradient(90deg,#4a4a4a 0,#4a4a4a 125px,#4a5cae 125px);-webkit-background-clip:text;background-clip:text"><span style="-webkit-text-fill-color:#f2f2f2">Space</span> <span style="-webkit-text-fill-color:transparent;letter-spacing:-0.1px">Play/ Stop</span></div>
<div class="t" style="left:569px;top:487px;font-size:12px;letter-spacing:-0.3px;color:#f2f2f2;background:linear-gradient(90deg,#4a4a4a 0,#4a4a4a 125px,#4a5cae 125px);-webkit-background-clip:text;background-clip:text"><span style="-webkit-text-fill-color:#f2f2f2">Space + click + drag</span> <span style="-webkit-text-fill-color:transparent;letter-spacing:-0.1px">Pan</span></div>
<div class="t" style="left:569px;top:501px;font-size:12px;letter-spacing:-0.3px;color:#f2f2f2;background:linear-gradient(90deg,#4a4a4a 0,#4a4a4a 125px,#4a5cae 125px);-webkit-background-clip:text;background-clip:text"><span style="-webkit-text-fill-color:#f2f2f2">Alt + click + drag</span> <span style="-webkit-text-fill-color:transparent;letter-spacing:-0.1px">Move Pivot Point</span></div>
<div class="t" style="left:569px;top:515px;font-size:12px;letter-spacing:-0.3px;color:#f2f2f2;background:linear-gradient(90deg,#4a4a4a 0,#4a4a4a 125px,#4a5cae 125px);-webkit-background-clip:text;background-clip:text"><span style="-webkit-text-fill-color:#f2f2f2">Shift</span> <span style="-webkit-text-fill-color:transparent;letter-spacing:-0.1px">Enable Snapping</span></div>
<div class="t" style="left:569px;top:535px;font-size:12px;letter-spacing:0.1px;color:#f2f2f2">00:00:02:14</div>
<div class="t" style="left:998px;top:535px;font-size:12px;letter-spacing:0.1px;color:#f2f2f2">Viewport Quality: High</div>
<div class="a" style="left:530px;top:558px;width:1057px;height:22px;background:#454545"></div>
<div class="fld" style="left:535px;top:561px;width:77px;height:16px;background:#2d2d2d"></div><div class="t" style="left:538px;top:560px">38%</div>
<svg style="left:600px;top:566px" width="9" height="6" viewBox="0 0 9 6"><path d="M0.5 0.5 L4.5 4.5 L8.5 0.5" fill="none" stroke="#ccc" stroke-width="1"/></svg>
<div class="a" style="left:866px;top:559px;width:100px;height:19px;background:#2d2d2d;border-radius:4px;border:1px solid #262626"></div>
<div class="a" style="left:886px;top:560px;width:1px;height:17px;background:#454545"></div>
<div class="a" style="left:906px;top:560px;width:1px;height:17px;background:#454545"></div>
<div class="a" style="left:926px;top:560px;width:1px;height:17px;background:#454545"></div>
<div class="a" style="left:946px;top:560px;width:1px;height:17px;background:#454545"></div>
<svg style="left:869.0px;top:562.5px" width="14" height="12" viewBox="0 0 14 12"><rect x="1" y="1" width="2" height="10" fill="#dcdcdc"/><path d="M13 1 V11 L4.5 6 Z" fill="#dcdcdc"/></svg>
<svg style="left:889.0px;top:562.5px" width="14" height="12" viewBox="0 0 14 12"><path d="M9 1 V11 L1 6 Z" fill="#dcdcdc"/><rect x="11" y="1" width="2" height="10" fill="#dcdcdc"/></svg>
<svg style="left:909.0px;top:562.5px" width="14" height="12" viewBox="0 0 14 12"><path d="M3 0.5 V11.5 L12 6 Z" fill="#dcdcdc"/></svg>
<svg style="left:929.0px;top:562.5px" width="14" height="12" viewBox="0 0 14 12"><rect x="1" y="1" width="2" height="10" fill="#dcdcdc"/><path d="M5 1 V11 L13 6 Z" fill="#dcdcdc"/></svg>
<svg style="left:949.0px;top:562.5px" width="14" height="12" viewBox="0 0 14 12"><path d="M1 1 V11 L9.5 6 Z" fill="#dcdcdc"/><rect x="11" y="1" width="2" height="10" fill="#dcdcdc"/></svg>
<div class="btn" style="left:971px;top:559px;width:20px;height:19px;background:#2d2d2d"></div>
<svg style="left:974.5px;top:562.5px" width="13" height="11" viewBox="0 0 13 11"><path d="M1 5 V10.5 H12 V3.5 H5" fill="none" stroke="#dcdcdc" stroke-width="1.4"/><path d="M7.5 0 V7 L3.5 3.5 Z" fill="#dcdcdc" transform="translate(2 0) scale(-1 1) translate(-11 0)"/></svg>
<div class="fld" style="left:1232px;top:559.5px;width:37px;height:19px;background:#2d2d2d"></div>
<svg style="left:1234px;top:564px" width="13" height="9" viewBox="0 0 13 9"><path d="M0 4.5 L3.5 0.5 H13 V8.5 H3.5 Z" fill="#dcdcdc"/><circle cx="3.6" cy="4.5" r="1.1" fill="#2d2d2d"/></svg>
<div class="t" style="left:1257px;top:560px;color:#8a8a8a">0</div>
<div class="btn" style="left:1272.5px;top:559.5px;width:31px;height:19px;background:#2d2d2d"></div>
<div class="a" style="left:1291.5px;top:560.5px;width:1px;height:17px;background:#454545"></div>
<svg style="left:1294.5px;top:565px" width="7" height="8" viewBox="0 0 7 8"><path d="M1 1 V7 L5.5 4 Z" fill="none" stroke="#808080" stroke-width="0.8"/></svg>
<svg style="left:1275.0px;top:563.0px" width="14" height="12" viewBox="0 0 14 12"><path d="M0.5 4 H3.5 L7.5 0.5 V11.5 L3.5 8 H0.5 Z" fill="#2fcf6f"/><path d="M9 3.5 Q10.5 6 9 8.5 M10.8 1.8 Q13.5 6 10.8 10.2" fill="none" stroke="#2fcf6f" stroke-width="1.2"/></svg>
<div class="btn" style="left:1307.5px;top:559.5px;width:31px;height:19px;background:#2d2d2d"></div>
<div class="a" style="left:1308.5px;top:560.5px;width:18px;height:17px;background:#464646;border-radius:3px 0 0 3px"></div><div class="a" style="left:1326.5px;top:560.5px;width:1px;height:17px;background:#2a2a2a"></div>
<svg style="left:1329.5px;top:565px" width="7" height="8" viewBox="0 0 7 8"><path d="M1 1 V7 L5.5 4 Z" fill="none" stroke="#808080" stroke-width="0.8"/></svg>
<svg style="left:1310.0px;top:563.0px" width="14" height="12" viewBox="0 0 14 12"><g transform="rotate(-38 7 6)"><path d="M3.2 11 V5.5 A3.8 3.8 0 0 1 10.8 5.5 V11" fill="none" stroke="#c8c8c8" stroke-width="2.3"/><path d="M2.05 9.3 h2.3 v1.9 h-2.3 Z M9.65 9.3 h2.3 v1.9 h-2.3 Z" fill="#fff"/></g></svg>
<div class="btn" style="left:1342.5px;top:559.5px;width:31px;height:19px;background:#2d2d2d"></div>
<div class="a" style="left:1343.5px;top:560.5px;width:18px;height:17px;background:#464646;border-radius:3px 0 0 3px"></div><div class="a" style="left:1361.5px;top:560.5px;width:1px;height:17px;background:#2a2a2a"></div>
<svg style="left:1364.5px;top:565px" width="7" height="8" viewBox="0 0 7 8"><path d="M1 1 V7 L5.5 4 Z" fill="none" stroke="#808080" stroke-width="0.8"/></svg>
<svg style="left:1345.0px;top:563.0px" width="14" height="12" viewBox="0 0 14 12"><path d="M4 0 V12 M10 0 V12 M0.5 3.5 H13.5 M0.5 8.5 H13.5" stroke="#dcdcdc" stroke-width="1.1" fill="none"/></svg>
<div class="btn" style="left:1377px;top:559.5px;width:19px;height:19px;background:#2d2d2d"></div>
<svg style="left:1379.5px;top:563.0px" width="14" height="12" viewBox="0 0 14 12"><rect x="0" y="1" width="3.5" height="10" fill="#2fcf6f"/><rect x="5.2" y="1.6" width="8.2" height="4.3" fill="none" stroke="#2fcf6f" stroke-width="1.2"/><rect x="4.6" y="7.5" width="9.4" height="3.5" fill="#2fcf6f"/></svg>
<div class="btn" style="left:1400.5px;top:559.5px;width:19px;height:19px;background:#464646"></div>
<svg style="left:1403.0px;top:563.0px" width="14" height="12" viewBox="0 0 14 12"><path d="M0.5 1 L4.5 6 L0.5 11 H2.5 L6.5 6 L2.5 1 Z M5 1 L9 6 L5 11 H7 L11 6 L7 1 Z M9.5 1 L13.5 6 L9.5 11 H10.5 L14 6 L10.5 1Z" fill="#dcdcdc"/></svg>
<div class="btn" style="left:1423px;top:559.5px;width:31px;height:19px;background:#2d2d2d"></div>
<div class="a" style="left:1424px;top:560.5px;width:18px;height:17px;background:#464646;border-radius:3px 0 0 3px"></div><div class="a" style="left:1442px;top:560.5px;width:1px;height:17px;background:#2a2a2a"></div>
<svg style="left:1445px;top:565px" width="7" height="8" viewBox="0 0 7 8"><path d="M1 1 V7 L5.5 4 Z" fill="none" stroke="#808080" stroke-width="0.8"/></svg>
<svg style="left:1425.5px;top:563.0px" width="14" height="12" viewBox="0 0 14 12"><rect x="0.6" y="0.6" width="12.8" height="8.8" fill="none" stroke="#dcdcdc" stroke-width="1.2"/><rect x="0" y="9.5" width="14" height="2.5" fill="#dcdcdc"/></svg>
<div class="btn" style="left:1458px;top:559.5px;width:31px;height:19px;background:#2d2d2d"></div>
<div class="a" style="left:1459px;top:560.5px;width:18px;height:17px;background:#464646;border-radius:3px 0 0 3px"></div><div class="a" style="left:1477px;top:560.5px;width:1px;height:17px;background:#2a2a2a"></div>
<svg style="left:1480px;top:565px" width="7" height="8" viewBox="0 0 7 8"><path d="M1 1 V7 L5.5 4 Z" fill="none" stroke="#808080" stroke-width="0.8"/></svg>
<svg style="left:1460.5px;top:563.0px" width="14" height="12" viewBox="0 0 14 12"><rect x="0.5" y="0.5" width="8" height="5.5" fill="none" stroke="#aaa" stroke-width="1"/><path d="M10.5 2.5 V8 H3 M12.5 4.5 V10 H5 M14 6.5 V11.8 H7" fill="none" stroke="#aaa" stroke-width="1"/></svg>
<div class="btn" style="left:1493px;top:559.5px;width:31px;height:19px;background:#2d2d2d"></div>
<div class="a" style="left:1494px;top:560.5px;width:18px;height:17px;background:#464646;border-radius:3px 0 0 3px"></div><div class="a" style="left:1512px;top:560.5px;width:1px;height:17px;background:#2a2a2a"></div>
<svg style="left:1515px;top:565px" width="7" height="8" viewBox="0 0 7 8"><path d="M1 1 V7 L5.5 4 Z" fill="none" stroke="#808080" stroke-width="0.8"/></svg>
<svg style="left:1495.5px;top:563.0px" width="14" height="12" viewBox="0 0 14 12"><rect x="0" y="0" width="8.5" height="8.5" fill="#aaa"/><rect x="5.5" y="4.5" width="8" height="7" fill="#464646" stroke="#dcdcdc" stroke-width="1.1"/></svg>
<div class="btn" style="left:1528px;top:559.5px;width:31px;height:19px;background:#2d2d2d"></div>
<div class="a" style="left:1547px;top:560.5px;width:1px;height:17px;background:#454545"></div>
<svg style="left:1550px;top:565px" width="7" height="8" viewBox="0 0 7 8"><path d="M1 1 V7 L5.5 4 Z" fill="none" stroke="#808080" stroke-width="0.8"/></svg>
<svg style="left:1530.5px;top:563.0px" width="14" height="12" viewBox="0 0 14 12"><rect x="1" y="0" width="3" height="3" fill="#2fcf6f"/><rect x="1" y="6" width="3" height="3" fill="#2fcf6f"/><rect x="4" y="3" width="3" height="3" fill="#2fcf6f"/><rect x="4" y="9" width="3" height="3" fill="#2fcf6f"/><rect x="7" y="0" width="3" height="3" fill="#2fcf6f"/><rect x="7" y="6" width="3" height="3" fill="#2fcf6f"/><rect x="10" y="3" width="3" height="3" fill="#2fcf6f"/><rect x="10" y="9" width="3" height="3" fill="#2fcf6f"/></svg>
<div class="btn" style="left:1563px;top:559.5px;width:19px;height:19px;background:#2d2d2d"></div>
<svg style="left:1565.5px;top:562px" width="14" height="14" viewBox="0 0 20 21"><path d="M10 1.5 l1.3 0 l.5 2.2 l1.6 .7 l1.9-1.2 l1.8 1.8 l-1.2 1.9 l.7 1.6 l2.2 .5 l0 2.6 l-2.2 .5 l-.7 1.6 l1.2 1.9 l-1.8 1.8 l-1.9-1.2 l-1.6 .7 l-.5 2.2 l-2.6 0 l-.5-2.2 l-1.6-.7 l-1.9 1.2 l-1.8-1.8 l1.2-1.9 l-.7-1.6 l-2.2-.5 l0-2.6 l2.2-.5 l.7-1.6 l-1.2-1.9 l1.8-1.8 l1.9 1.2 l1.6-.7 l.5-2.2 Z" fill="#dcdcdc" transform="translate(-0.65 -0.3)"/><circle cx="10" cy="10.5" r="3" fill="#2d2d2d"/></svg>

<div class="tab" style="left:1593px;top:85px;width:40px;background:#464646"></div><div class="t" style="left:1598px;top:88px">Color</div>
<div class="tabi" style="left:1634px;top:85px;width:69px;background:#242424"></div><div class="t" style="left:1639px;top:88px">Add Layers</div>
<div class="a" style="left:1593px;top:107px;width:321px;height:377px;background:#424242"></div>
<div class="a" style="left:1594px;top:107px;width:306px;height:377px;background:#464646;overflow:hidden">
<div class="a" style="left:52px;top:-47px;width:200px;height:200px;border-radius:50%;background:conic-gradient(from 0deg,#80ff00 0deg,#ffff00 30deg,#ff0000 90deg,#ff00ff 150deg,#0000ff 210deg,#00ffff 270deg,#00ff00 330deg,#80ff00 360deg)"></div>
<div class="a" style="left:77px;top:-22px;width:150px;height:150px;border-radius:50%;background:#464646"></div>
<div class="a" style="left:108px;top:9px;width:90px;height:90px;background:linear-gradient(to right,#000,rgba(0,0,0,0)),linear-gradient(to bottom,#fff,#1a00ff)"></div>
<div class="a" style="left:191px;top:62.5px;width:13px;height:13px;border:1px solid #fff;border-radius:50%"></div>
<div class="a" style="left:110px;top:126px;width:13px;height:13px;border:1px solid #fff;border-radius:50%"></div>
</div>
<div class="a" style="left:1902px;top:153px;width:10px;height:302px;background:#555;border-radius:5px"></div>
<div class="a" style="left:1600px;top:273px;width:22px;height:22px;background:#6755ff;border-radius:3px"></div>
<div class="t" style="left:1625px;top:276px">Medium Slateblue</div>
<div class="btn" style="left:1871px;top:273px;width:22px;height:22px;background:#2d2d2d"></div>
<svg style="left:1875px;top:277px" width="14" height="14" viewBox="0 0 14 14"><path d="M1 13 L1.5 11 L7.5 5 L9 6.5 L3 12.5 Z" fill="none" stroke="#ccc" stroke-width="1"/><path d="M7 3.5 L10.5 7 M8.5 5 L11 2.5 A1.5 1.5 0 0 1 13 4.5 L10.5 7" fill="#ccc" stroke="#ccc" stroke-width="1.3"/></svg>
<div class="a" style="left:1600px;top:301px;width:50px;height:17px;background:#464646;border:1px solid #606060;border-radius:2px"></div><div class="t" style="left:1603px;top:301px">Hex</div>
<svg style="left:1635px;top:306px" width="9" height="6" viewBox="0 0 9 6"><path d="M0.5 0.5 L4.5 4.5 L8.5 0.5" fill="none" stroke="#ccc" stroke-width="1"/></svg>
<div class="fld" style="left:1653px;top:298px;width:240px;height:22px;background:#262626"></div><div class="t" style="left:1658px;top:301px;color:#5a5a5a">#</div><div class="t" style="left:1670px;top:301px">6755ff</div>
<div class="a" style="left:1600px;top:330px;width:233px;height:4px;background:#dcdcdc;border-radius:2px"></div>
<div class="a" style="left:1828.5px;top:327px;width:10px;height:10px;background:#7fd1b9;border-radius:5px"></div><div class="a" style="left:1831.5px;top:330px;width:4px;height:4px;background:#4f9a86;border-radius:2px"></div>
<div class="fld" style="left:1849px;top:324px;width:44px;height:16px;background:#262626"></div><div class="t" style="left:1853px;top:324px;color:#5a5a5a">A</div><div class="t" style="left:1866px;top:324px">255</div>
<div class="a" style="left:1598px;top:347px;width:298px;height:21px;background:#2b2b2b;border-radius:4px 4px 0 0"></div>
<div class="a" style="left:1598px;top:348px;width:149px;height:20px;background:#464646;border-radius:4px 4px 0 0"></div>
<div class="t" style="left:1648px;top:349px">Swatches</div><div class="t" style="left:1793px;top:349px;color:#c0c0c0">Generator</div>
<div class="a" style="left:1598px;top:371px;width:257px;height:18px;background:#555;border-radius:4px"></div>
<div class="a" style="left:1599px;top:372px;width:62px;height:16px;background:#262626;border-radius:3px"></div>
<svg style="left:1605px;top:375px" width="11" height="10" viewBox="0 0 11 10"><path d="M1 0 V10 M4 0 V10 M6.5 0.3 L9.8 9.8" stroke="#2fcf6f" stroke-width="1.5" fill="none"/></svg>
<div class="t" style="left:1621px;top:372px">Library</div>
<svg style="left:1671px;top:375px" width="11" height="10" viewBox="0 0 11 10"><path d="M0.5 9.5 V0.5 H4 L5 1.8 H10.5 V9.5 Z" fill="none" stroke="#ccc" stroke-width="1"/><path d="M2.2 4.2 H8.8 M2.2 6 H8.8 M2.2 7.8 H8.8" stroke="#ccc" stroke-width="1"/></svg>
<div class="t" style="left:1686px;top:372px">Project</div>
<svg style="left:1738px;top:374px" width="9" height="11" viewBox="0 0 9 11"><path d="M0.6 0.6 H5.5 L8.4 3.5 V10.4 H0.6 Z M5.5 0.6 V3.5 H8.4" fill="none" stroke="#ccc" stroke-width="1"/></svg>
<div class="t" style="left:1752px;top:372px">Scene</div>
<svg style="left:1801px;top:375px" width="10" height="10" viewBox="0 0 10 10"><path d="M3 0.6 H7 Q9.4 0.6 9.4 3 V5.5 L5.5 9.4 H3 Q0.6 9.4 0.6 7 V3 Q0.6 0.6 3 0.6 Z M9.4 5.5 H7 Q5.5 5.5 5.5 7 V9.4" fill="none" stroke="#ccc" stroke-width="1"/></svg>
<div class="t" style="left:1816px;top:372px">Labels</div>
<div class="a" style="left:1858px;top:371px;width:38px;height:18px;background:#555;border-radius:4px"></div><div class="a" style="left:1859px;top:372px;width:17px;height:16px;background:#262626;border-radius:3px"></div>
<svg style="left:1863px;top:376px" width="9" height="9" viewBox="0 0 9 9"><g fill="#2fcf6f"><rect x="0" y="0" width="3.6" height="3.6"/><rect x="5.4" y="0" width="3.6" height="3.6"/><rect x="0" y="5.4" width="3.6" height="3.6"/><rect x="5.4" y="5.4" width="3.6" height="3.6"/></g></svg>
<svg style="left:1881px;top:376px" width="11" height="9" viewBox="0 0 11 9"><path d="M0 1 H11 M0 4.5 H11 M0 8 H11" stroke="#ddd" stroke-width="1"/></svg>
<div class="a" style="left:1598px;top:392px;width:276px;height:17px;background:#464646;border:1px solid #585858;border-radius:2px"></div><div class="t" style="left:1601px;top:393px">new</div>
<svg style="left:1860px;top:398px" width="9" height="6" viewBox="0 0 9 6"><path d="M0.5 0.5 L4.5 4.5 L8.5 0.5" fill="none" stroke="#ccc" stroke-width="1"/></svg>
<svg style="left:1880px;top:400px" width="12" height="2" viewBox="0 0 12 2"><g fill="#ddd"><rect x="0" y="0" width="2" height="2"/><rect x="5" y="0" width="2" height="2"/><rect x="10" y="0" width="2" height="2"/></g></svg>
<div class="a" style="left:1598px;top:410px;width:298px;height:74px;background:#262626"></div>
<div class="a" style="left:1600px;top:412px;width:18px;height:18px;background:#8a4dff;border-radius:3px"></div>
<div class="a" style="left:1622px;top:412px;width:18px;height:18px;background:#4d9fff;border-radius:3px"></div>
<div class="a" style="left:1644px;top:412px;width:18px;height:18px;background:#ff7650;border-radius:3px"></div>
<div class="a" style="left:1666px;top:412px;width:18px;height:18px;background:#50ffb0;border-radius:3px"></div>
<div class="a" style="left:1688px;top:412px;width:18px;height:18px;background:#ff4d5e;border-radius:3px"></div>
<div class="a" style="left:1710px;top:412px;width:18px;height:18px;background:#ff4db8;border-radius:3px"></div>
<div class="a" style="left:1732px;top:412px;width:18px;height:18px;background:#ffd04d;border-radius:3px"></div>
<div class="a" style="left:1754px;top:412px;width:18px;height:18px;background:#4066d9;border-radius:3px"></div>
<div class="a" style="left:1776px;top:412px;width:18px;height:18px;background:#5ae0d0;border-radius:3px"></div>
<div class="a" style="left:1798px;top:412px;width:18px;height:18px;background:#d87fd8;border-radius:3px"></div>
<div class="a" style="left:1820px;top:412px;width:18px;height:18px;background:#b5eb8c;border-radius:3px"></div>
<div class="a" style="left:1842px;top:412px;width:18px;height:18px;background:#6755ff;border-radius:3px"></div>
<div class="tab" style="left:1593px;top:490px;width:38px;background:#464646"></div><div class="t" style="left:1598px;top:493px">Align</div>
<div class="a" style="left:1593px;top:512px;width:321px;height:68px;background:#464646"></div>
<div class="t" style="left:1601px;top:523px">Alignment</div><div class="t" style="left:1601px;top:551px">Distribution</div>
<div class="a" style="left:1790.5px;top:523px;width:53px;height:17px;background:#2b2b2b;border-radius:4px;border:1px solid #252525"></div>
<svg style="left:1793.5px;top:526px" width="12" height="11" viewBox="0 0 12 11"><path d="M1 0 V11 M3 3.5 H8 M3 7.5 H11" stroke="#dcdcdc" stroke-width="1.3" fill="none"/></svg>
<div class="a" style="left:1808.0px;top:524px;width:1px;height:15px;background:#464646"></div>
<svg style="left:1811.0px;top:526px" width="12" height="11" viewBox="0 0 12 11"><path d="M6 0 V11 M2.5 3.5 H9.5 M0.5 7.5 H11.5" stroke="#dcdcdc" stroke-width="1.3" fill="none"/></svg>
<div class="a" style="left:1825.5px;top:524px;width:1px;height:15px;background:#464646"></div>
<svg style="left:1828.5px;top:526px" width="12" height="11" viewBox="0 0 12 11"><path d="M11 0 V11 M4 3.5 H9 M1 7.5 H9" stroke="#dcdcdc" stroke-width="1.3" fill="none"/></svg>
<div class="a" style="left:1852.5px;top:523px;width:53px;height:17px;background:#2b2b2b;border-radius:4px;border:1px solid #252525"></div>
<svg style="left:1855.5px;top:526px" width="12" height="11" viewBox="0 0 12 11"><path d="M0 1 H12 M4 3 V10 M8 3 V6.5" stroke="#dcdcdc" stroke-width="1.3" fill="none"/></svg>
<div class="a" style="left:1870.0px;top:524px;width:1px;height:15px;background:#464646"></div>
<svg style="left:1873.0px;top:526px" width="12" height="11" viewBox="0 0 12 11"><path d="M0 5.5 H12 M4 0.5 V10.5 M8 2.5 V8.5" stroke="#dcdcdc" stroke-width="1.3" fill="none"/></svg>
<div class="a" style="left:1887.5px;top:524px;width:1px;height:15px;background:#464646"></div>
<svg style="left:1890.5px;top:526px" width="12" height="11" viewBox="0 0 12 11"><path d="M0 10 H12 M4 4.5 V8.5 M8 1 V8.5" stroke="#dcdcdc" stroke-width="1.3" fill="none"/></svg>
<div class="a" style="left:1790.5px;top:551px;width:53px;height:17px;background:#2b2b2b;border-radius:4px;border:1px solid #252525"></div>
<svg style="left:1793.5px;top:554px" width="12" height="11" viewBox="0 0 12 11"><path d="M1 0 V11 M6 2 V9 M11 0 V11" stroke="#dcdcdc" stroke-width="1.3" fill="none"/></svg>
<div class="a" style="left:1808.0px;top:552px;width:1px;height:15px;background:#464646"></div>
<svg style="left:1811.0px;top:554px" width="12" height="11" viewBox="0 0 12 11"><path d="M0 1 H12 M1.5 5.5 H10.5 M0 10 H12" stroke="#dcdcdc" stroke-width="1.3" fill="none"/></svg>
<div class="a" style="left:1825.5px;top:552px;width:1px;height:15px;background:#464646"></div>
<svg style="left:1828.5px;top:554px" width="12" height="11" viewBox="0 0 12 11"><path d="M3 10 V6.5 M6 8.5 V4.5 M9 6 V2.5" stroke="#dcdcdc" stroke-width="1.3" fill="none"/><g fill="#dcdcdc"><rect x="0" y="0" width="1.5" height="1.5"/><rect x="10.5" y="0" width="1.5" height="1.5"/><rect x="0" y="9.5" width="1.5" height="1.5"/><rect x="10.5" y="9.5" width="1.5" height="1.5"/></g></svg>

<div class="tab" style="left:494px;top:586px;width:89px;background:#404040"></div><div class="t" style="left:499px;top:589px">Scene Window</div>
<div class="tabi" style="left:584px;top:586px;width:99px;background:#242424"></div><div class="t" style="left:589px;top:589px">JavaScript Editor</div>
<div class="tabi" style="left:685px;top:586px;width:112px;background:#242424"></div><div class="t" style="left:690px;top:589px">Dependency Graph</div>
<div class="a" style="left:494px;top:608px;width:1420px;height:1px;background:#2fcf6f"></div>
<div class="a" style="left:494px;top:609px;width:1420px;height:23px;background:#2a2a2a"></div><div class="a" style="left:988px;top:630px;width:3px;height:368px;background:#202020"></div>
<div class="a" style="left:1558px;top:611px;width:350px;height:19px;background:#454545;border-radius:3px 3px 0 0"></div>
<div class="t" style="left:614.5px;width:100px;text-align:center;top:611px;color:#a0a0a0">Composition 1</div>
<svg style="left:835px;top:616px" width="8" height="8" viewBox="0 0 8 8"><path d="M0.5 0.5 L7.5 7.5 M7.5 0.5 L0.5 7.5" stroke="#aaa" stroke-width="1"/></svg>
<div class="a" style="left:852px;top:615px;width:1px;height:10px;background:#aaa"></div>
<div class="t" style="left:967px;width:100px;text-align:center;top:611px;color:#a0a0a0">Composition 2</div>
<svg style="left:1187px;top:616px" width="8" height="8" viewBox="0 0 8 8"><path d="M0.5 0.5 L7.5 7.5 M7.5 0.5 L0.5 7.5" stroke="#aaa" stroke-width="1"/></svg>
<div class="a" style="left:1204px;top:615px;width:1px;height:10px;background:#aaa"></div>
<div class="t" style="left:1319px;width:100px;text-align:center;top:611px;color:#a0a0a0">Composition 3</div>
<svg style="left:1540px;top:616px" width="8" height="8" viewBox="0 0 8 8"><path d="M0.5 0.5 L7.5 7.5 M7.5 0.5 L0.5 7.5" stroke="#aaa" stroke-width="1"/></svg>
<div class="t" style="left:1671.5px;width:100px;text-align:center;top:611px;color:#e6e6e6">Composition 4</div>
<svg style="left:1892px;top:616px" width="8" height="8" viewBox="0 0 8 8"><path d="M0.5 0.5 L7.5 7.5 M7.5 0.5 L0.5 7.5" stroke="#aaa" stroke-width="1"/></svg>
<div class="a" style="left:494px;top:630px;width:490px;height:25px;background:#3a3a3a"></div>
<div class="a" style="left:497px;top:632px;width:279px;height:20px;background:#262626;border-radius:10px"></div>
<svg style="left:500px;top:636px" width="13" height="13" viewBox="0 0 13 13"><circle cx="5.5" cy="5.5" r="4.5" fill="none" stroke="#d0d0d0" stroke-width="1.2"/><path d="M9 9 L12.5 12.5" stroke="#d0d0d0" stroke-width="1.8"/></svg>
<div class="t dim" style="left:520px;top:634px">Enter a layer name</div>
<div class="btn" style="left:778.5px;top:633px;width:19.5px;height:19px;background:#2d2d2d"></div>
<div class="btn" style="left:822.5px;top:633px;width:19.5px;height:19px;background:#2d2d2d"></div>
<div class="btn" style="left:844.5px;top:633px;width:19.5px;height:19px;background:#2d2d2d"></div>
<div class="btn" style="left:866.5px;top:633px;width:19.5px;height:19px;background:#2d2d2d"></div>
<svg style="left:782.5px;top:637px" width="14" height="13" viewBox="0 0 14 13"><path d="M5.5 0.5 V10.5 M0.5 5.5 H10.5" stroke="#eee" stroke-width="1.6"/><path d="M14 13 L11.5 13 L14 10.5Z" fill="#5fcfa8"/></svg>
<svg style="left:825px;top:635px" width="15" height="15" viewBox="0 0 15 15"><circle cx="6" cy="10" r="4" fill="#666"/><circle cx="7.5" cy="8" r="4" fill="#999"/><circle cx="9.5" cy="5.5" r="4.2" fill="#e6e6e6"/></svg>
<svg style="left:847px;top:635px" width="15" height="15" viewBox="0 0 15 15"><g fill="#e0e0e0"><circle cx="3" cy="2.5" r="1.1"/><circle cx="9" cy="2" r="1.1"/><circle cx="2.5" cy="8" r="1.1"/><circle cx="5" cy="12" r="0.9"/><path d="M9 4.5 L10.2 8 L13.5 9.2 L10.2 10.4 L9 13.8 L7.8 10.4 L4.5 9.2 L7.8 8 Z"/></g><path d="M15 15 L12.5 15 L15 12.5Z" fill="#5fcfa8"/></svg>
<svg style="left:869px;top:636px" width="15" height="14" viewBox="0 0 15 14"><path d="M0.5 2 H5 M9 2 H13.5 M0.5 6.5 H7 M11 6.5 H13.5 M0.5 11 H3 M7 11 H13.5" stroke="#e0e0e0" stroke-width="1.1"/><circle cx="7" cy="2" r="1.5" fill="none" stroke="#e0e0e0"/><circle cx="9" cy="6.5" r="1.5" fill="none" stroke="#e0e0e0"/><circle cx="5" cy="11" r="1.5" fill="none" stroke="#e0e0e0"/><path d="M15 14 L12.5 14 L15 11.5Z" fill="#5fcfa8"/></svg>
<div class="fld" style="left:888.5px;top:633px;width:94px;height:19px;background:#2a2a2a"></div><div class="t" style="left:893px;top:634px;color:#555">F</div><div class="t" style="left:905.5px;top:634px">74</div>
<div class="a" style="left:494px;top:655px;width:490px;height:17px;background:#464646"></div>
<svg style="left:500px;top:657px" width="9" height="12" viewBox="0 0 9 12"><rect x="0.5" y="5" width="8" height="6.5" rx="1" fill="#ddd"/><path d="M2.3 5 V3.2 A2.2 2.2 0 0 1 6.7 3.2 V5" fill="none" stroke="#ddd" stroke-width="1.2"/><circle cx="4.5" cy="8" r="1" fill="#464646"/></svg>
<svg style="left:516px;top:658px" width="14" height="10" viewBox="0 0 14 10"><path d="M0.5 5 Q7 -2.5 13.5 5 Q7 12.5 0.5 5 Z" fill="none" stroke="#ddd" stroke-width="1.1"/><circle cx="7" cy="5" r="2.2" fill="none" stroke="#ddd" stroke-width="1.1"/></svg>
<svg style="left:537px;top:656px" width="13" height="14" viewBox="0 0 13 14"><path d="M6.5 0.7 L12.3 3.8 V10.2 L6.5 13.3 L0.7 10.2 V3.8 Z M0.7 3.8 L6.5 7 L12.3 3.8 M6.5 7 V13.3" fill="none" stroke="#ddd" stroke-width="1"/></svg>
<svg style="left:555px;top:657px" width="14" height="12" viewBox="0 0 14 12"><path d="M0.5 4 H3.5 L7.5 0.5 V11.5 L3.5 8 H0.5 Z" fill="#ddd"/><path d="M9 3.5 Q10.5 6 9 8.5 M10.8 1.8 Q13.5 6 10.8 10.2" fill="none" stroke="#ddd" stroke-width="1.1"/></svg>
<svg style="left:575px;top:656px" width="13" height="13" viewBox="0 0 13 13"><path d="M1 12 L1.5 10 L7 4.5 L8.5 6 L3 11.5 Z" fill="none" stroke="#bbb" stroke-width="1"/><path d="M6.5 3 L10 6.5 M8 4.5 L10.5 2 A1.5 1.5 0 0 1 12 3.5 L9.5 6" fill="#ddd" stroke="#ddd" stroke-width="1.2"/></svg>
<svg style="left:594px;top:659px" width="13" height="9" viewBox="0 0 13 9"><path d="M0 4.5 L3.5 0.5 H13 V8.5 H3.5 Z" fill="#e6e6e6"/><circle cx="3.6" cy="4.5" r="1.1" fill="#464646"/></svg>
<div class="t" style="left:649px;top:655px">Name</div>
<div class="a" style="left:494px;top:672px;width:490px;height:304px;background:#2a2a2a"></div>
<div class="a" style="left:494px;top:672px;width:478px;height:65px;background:#3a3a3a"></div>
<div class="a" style="left:494px;top:673px;width:474px;height:20px;background:#4f5a53;border-radius:0 3px 3px 0"></div>
<div class="a" style="left:497px;top:717px;width:471px;height:20px;background:#5a5647;border-radius:3px"></div>
<div class="a" style="left:497px;top:674px;width:17px;height:18px;background:#49534d;border-radius:3px"></div>
<div class="a" style="left:515.5px;top:674px;width:17px;height:18px;background:#49534d;border-radius:3px"></div>
<div class="a" style="left:497px;top:696px;width:17px;height:18px;background:#2a2a2a;border-radius:3px"></div>
<div class="a" style="left:515.5px;top:696px;width:17px;height:18px;background:#2a2a2a;border-radius:3px"></div>
<div class="a" style="left:497px;top:718px;width:17px;height:18px;background:#2a2a2a;border-radius:3px"></div>
<div class="a" style="left:515.5px;top:718px;width:17px;height:18px;background:#2a2a2a;border-radius:3px"></div>
<div class="a" style="left:534.5px;top:718px;width:17px;height:18px;background:#2a2a2a;border-radius:3px"></div>
<svg style="left:518px;top:678px" width="12" height="12" viewBox="0 0 12 12"><circle cx="5.5" cy="6" r="4.5" fill="none" stroke="#888" stroke-width="1"/><path d="M3.3 6 L5 7.8 L9.5 2.5" fill="none" stroke="#888" stroke-width="1.1"/></svg>
<svg style="left:518px;top:700px" width="12" height="12" viewBox="0 0 12 12"><circle cx="5.5" cy="6" r="4.5" fill="none" stroke="#888" stroke-width="1"/><path d="M3.3 6 L5 7.8 L9.5 2.5" fill="none" stroke="#888" stroke-width="1.1"/></svg>
<svg style="left:517px;top:723px" width="14" height="10" viewBox="0 0 14 10"><path d="M0.5 5 Q7 -2.5 13.5 5 Q7 12.5 0.5 5 Z" fill="none" stroke="#ddd" stroke-width="1.1"/><circle cx="7" cy="5" r="2.2" fill="none" stroke="#ddd" stroke-width="1.1"/></svg>
<div class="a" style="left:573px;top:675px;width:16px;height:16px;background:#5a9a78;border-radius:2px"></div>
<svg style="left:594px;top:678.5px" width="13" height="9" viewBox="0 0 13 9"><path d="M0 4.5 L3.5 0.5 H13 V8.5 H3.5 Z" fill="#9a9a9a"/><circle cx="3.6" cy="4.5" r="1.1" fill="#3a3a3a"/></svg>
<div class="a" style="left:573px;top:697px;width:16px;height:16px;background:#8a9a5a;border-radius:2px"></div>
<svg style="left:594px;top:700.5px" width="13" height="9" viewBox="0 0 13 9"><path d="M0 4.5 L3.5 0.5 H13 V8.5 H3.5 Z" fill="#9a9a9a"/><circle cx="3.6" cy="4.5" r="1.1" fill="#3a3a3a"/></svg>
<div class="a" style="left:573px;top:719px;width:16px;height:16px;background:#fbe36e;border-radius:2px"></div>
<svg style="left:594px;top:722.5px" width="13" height="9" viewBox="0 0 13 9"><path d="M0 4.5 L3.5 0.5 H13 V8.5 H3.5 Z" fill="#eee"/><circle cx="3.6" cy="4.5" r="1.1" fill="#3a3a3a"/></svg>
<div class="a" style="left:610px;top:675px;width:32px;height:16px;background:#48524c;border-radius:2px"></div>
<svg style="left:614px;top:680px" width="8" height="5" viewBox="0 0 8 5"><path d="M0.5 0.5 L4 4 L7.5 0.5" fill="none" stroke="#7a8a80" stroke-width="1"/></svg>
<svg style="left:649px;top:676px" width="14" height="15" viewBox="0 0 14 15"><rect x="0" y="7" width="8" height="7" fill="#7a9ab8"/><rect x="3" y="4" width="8" height="7" fill="#4f5a53"/><path d="M5 1 H14 M5 3.5 H14 M5 6 H14" stroke="#b0b0b0" stroke-width="1"/><rect x="0" y="7" width="8" height="7" fill="#7a9ab8"/></svg>
<div class="t" style="left:667px;top:675px;color:#aab0ac;text-decoration:line-through">Color Array</div>
<svg style="left:668px;top:698px" width="13" height="13" viewBox="0 0 13 13"><g stroke="#5a9a6a" stroke-width="1" fill="none"><path d="M0.5 0.5 L3 3 M3 0.5 L0.5 3 M6 2.5 L8.5 5 M8.5 2.5 L6 5 M9.5 8 L12.5 11 M12.5 8 L9.5 11 M1.5 9 L4 11.5 M4 9 L1.5 11.5"/></g><circle cx="10" cy="1.5" r="0.8" fill="#5a9a6a"/></svg>
<div class="t" style="left:686px;top:697px;color:#9a9a9a;text-decoration:line-through">Random [Index]</div>
<svg style="left:649px;top:721px" width="13" height="13" viewBox="0 0 13 13"><path d="M3.5 1 H9.5 M3.5 12 H9.5 M1 3.5 V9.5 M12 3.5 V9.5" stroke="#f0dc6a" stroke-width="1" fill="none"/><g fill="#ececec"><rect x="0" y="0" width="1.8" height="1.8"/><rect x="11.2" y="0" width="1.8" height="1.8"/><rect x="0" y="11.2" width="1.8" height="1.8"/><rect x="11.2" y="11.2" width="1.8" height="1.8"/></g></svg>
<div class="t" style="left:667px;top:719px;letter-spacing:-0.85px">Ellipse Shape</div>
<svg style="left:914px;top:679px" width="8" height="8" viewBox="0 0 8 8"><circle cx="4" cy="4" r="3.4" fill="none" stroke="#777" stroke-width="0.9"/><path d="M1.6 6.4 L6.4 1.6" stroke="#777" stroke-width="0.9"/></svg>
<svg style="left:914px;top:701px" width="8" height="8" viewBox="0 0 8 8"><circle cx="4" cy="4" r="3.4" fill="none" stroke="#777" stroke-width="0.9"/><path d="M1.6 6.4 L6.4 1.6" stroke="#777" stroke-width="0.9"/></svg>
<div class="a" style="left:930px;top:675px;width:21px;height:16px;background:#48524c;border-radius:2px"></div><div class="a" style="left:940px;top:675px;width:1px;height:16px;background:#56615a"></div>
<svg style="left:933px;top:679px" width="16" height="8" viewBox="0 0 16 8"><path d="M5 0.5 V7.5 L0.5 4 Z" fill="#8a7a4a"/><path d="M10 0.5 V7.5 L14.5 4 Z" fill="#5a645e"/></svg>
<div class="a" style="left:930px;top:697px;width:21px;height:16px;background:#333;border-radius:2px"></div><div class="a" style="left:940px;top:697px;width:1px;height:16px;background:#3e3e3e"></div>
<svg style="left:933px;top:701px" width="16" height="8" viewBox="0 0 16 8"><path d="M5 0.5 V7.5 L0.5 4 Z" fill="#555"/><path d="M9.5 0 V8 L15 4 Z" fill="#c850e0"/></svg>
<svg style="left:956px;top:700px" width="10" height="10" viewBox="0 0 10 10"><circle cx="5" cy="5" r="4" fill="none" stroke="#aaa" stroke-width="1"/></svg>
<svg style="left:956px;top:722px" width="10" height="10" viewBox="0 0 10 10"><circle cx="5" cy="5" r="4" fill="none" stroke="#7a7664" stroke-width="1"/></svg>
<div class="a" style="left:972px;top:673px;width:10px;height:288px;background:#4b4b4b;border-radius:5px"></div>
<div class="a" style="left:497px;top:964px;width:472px;height:9.5px;background:#4b4b4b;border-radius:5px"></div>
<div class="a" style="left:494px;top:976px;width:490px;height:22px;background:#3a3a3a"></div>
<div class="btn" style="left:497px;top:978px;width:20px;height:18px;background:#2d2d2d"></div>
<svg style="left:500px;top:982.5px" width="13" height="9" viewBox="0 0 13 9"><path d="M0 4.5 L3.5 0.5 H13 V8.5 H3.5 Z" fill="#e6e6e6"/><circle cx="3.6" cy="4.5" r="1.1" fill="#2d2d2d"/></svg>
<div class="t" style="left:520.5px;top:979px">1 selected</div>
<div class="btn" style="left:776px;top:978px;width:18px;height:18px;background:#2d2d2d"></div>
<svg style="left:779px;top:981px" width="12" height="12" viewBox="0 0 12 12"><rect x="0.6" y="0.6" width="10.8" height="10.8" fill="none" stroke="#ddd" stroke-width="1.1"/><rect x="4" y="4" width="4" height="4" fill="#ddd"/></svg>
<div class="a" style="left:798px;top:978px;width:184px;height:18px;background:#555;border-radius:4px"></div><div class="a" style="left:799px;top:979px;width:86px;height:16px;background:#262626;border-radius:3px"></div>
<svg style="left:804px;top:982px" width="12" height="10" viewBox="0 0 12 10"><path d="M1 1 H11 M3 5 H9 M0 9 H10" stroke="#2fcf6f" stroke-width="1.8"/></svg>
<div class="t" style="left:821px;top:979px">Time Editor</div>
<svg style="left:893px;top:981px" width="13" height="12" viewBox="0 0 13 12"><path d="M1.5 0 V10.5 H13" fill="none" stroke="#ccc" stroke-width="1.1"/><path d="M1.5 10.5 L6 5 L8 7 L12 2" fill="none" stroke="#ccc" stroke-width="1"/></svg>
<div class="t" style="left:910px;top:979px">Graph Editor</div>
<div class="a" style="left:984px;top:630px;width:4px;height:368px;background:#2a2a2a"></div>
<svg style="left:986px;top:808px" width="2" height="16" viewBox="0 0 2 16"><g fill="#777"><rect y="0" width="2" height="2"/><rect y="4.5" width="2" height="2"/><rect y="9" width="2" height="2"/><rect y="13.5" width="2" height="2"/></g></svg>
<div class="a" style="left:991px;top:630px;width:923px;height:346px;background:#2a2a2a"></div>
<div class="a" style="left:991px;top:630px;width:923px;height:24px;background:#272727"></div>
<svg style="left:0;top:632px" width="1920" height="24" viewBox="0 0 1920 24"><path d="M1000.0 14 V22 M1010.9 18.5 V22 M1021.7 18.5 V22 M1032.6 18.5 V22 M1043.4 18.5 V22 M1054.3 14 V22 M1065.2 18.5 V22 M1076.0 18.5 V22 M1086.9 18.5 V22 M1097.8 18.5 V22 M1108.6 14 V22 M1119.5 18.5 V22 M1130.3 18.5 V22 M1141.2 18.5 V22 M1152.1 18.5 V22 M1162.9 14 V22 M1173.8 18.5 V22 M1184.7 18.5 V22 M1195.5 18.5 V22 M1206.4 18.5 V22 M1217.2 14 V22 M1228.1 18.5 V22 M1239.0 18.5 V22 M1249.8 18.5 V22 M1260.7 18.5 V22 M1271.6 14 V22 M1282.4 18.5 V22 M1293.3 18.5 V22 M1304.1 18.5 V22 M1315.0 18.5 V22 M1325.9 14 V22 M1336.7 18.5 V22 M1347.6 18.5 V22 M1358.5 18.5 V22 M1369.3 18.5 V22 M1380.2 14 V22 M1391.0 18.5 V22 M1401.9 18.5 V22 M1412.8 18.5 V22 M1423.6 18.5 V22 M1434.5 14 V22 M1445.4 18.5 V22 M1456.2 18.5 V22 M1467.1 18.5 V22 M1477.9 18.5 V22 M1488.8 14 V22 M1499.7 18.5 V22 M1510.5 18.5 V22 M1521.4 18.5 V22 M1532.3 18.5 V22 M1543.1 14 V22 M1554.0 18.5 V22 M1564.8 18.5 V22 M1575.7 18.5 V22 M1586.6 18.5 V22 M1597.4 14 V22 M1608.3 18.5 V22 M1619.2 18.5 V22 M1630.0 18.5 V22 M1640.9 18.5 V22 M1651.7 14 V22 M1662.6 18.5 V22 M1673.5 18.5 V22 M1684.3 18.5 V22 M1695.2 18.5 V22 M1706.1 14 V22 M1716.9 18.5 V22 M1727.8 18.5 V22 M1738.6 18.5 V22 M1749.5 18.5 V22 M1760.4 14 V22 M1771.2 18.5 V22 M1782.1 18.5 V22 M1793.0 18.5 V22 M1803.8 18.5 V22 M1814.7 14 V22 M1825.5 18.5 V22 M1836.4 18.5 V22 M1847.3 18.5 V22 M1858.1 18.5 V22 M1869.0 14 V22 M1879.9 18.5 V22 M1890.7 18.5 V22 M1901.6 18.5 V22 M1912.4 18.5 V22" stroke="#777" stroke-width="1" fill="none"/></svg>
<div class="t" style="left:979.3px;width:40px;text-align:center;top:630px;color:#d8d8d8">0</div>
<div class="t" style="left:1033.6px;width:40px;text-align:center;top:630px;color:#d8d8d8">15</div>
<div class="t" style="left:1087.9px;width:40px;text-align:center;top:630px;color:#d8d8d8">30</div>
<div class="t" style="left:1142.2px;width:40px;text-align:center;top:630px;color:#d8d8d8">45</div>
<div class="t" style="left:1196.5px;width:40px;text-align:center;top:630px;color:#d8d8d8">60</div>
<div class="t" style="left:1250.9px;width:40px;text-align:center;top:630px;color:#d8d8d8">75</div>
<div class="t" style="left:1305.2px;width:40px;text-align:center;top:630px;color:#d8d8d8">90</div>
<div class="t" style="left:1359.5px;width:40px;text-align:center;top:630px;color:#d8d8d8">105</div>
<div class="t" style="left:1413.8px;width:40px;text-align:center;top:630px;color:#d8d8d8">120</div>
<div class="t" style="left:1468.1px;width:40px;text-align:center;top:630px;color:#d8d8d8">135</div>
<div class="t" style="left:1522.4px;width:40px;text-align:center;top:630px;color:#d8d8d8">150</div>
<div class="t" style="left:1576.7px;width:40px;text-align:center;top:630px;color:#d8d8d8">165</div>
<div class="t" style="left:1631.0px;width:40px;text-align:center;top:630px;color:#d8d8d8">180</div>
<div class="t" style="left:1685.4px;width:40px;text-align:center;top:630px;color:#d8d8d8">195</div>
<div class="t" style="left:1739.7px;width:40px;text-align:center;top:630px;color:#d8d8d8">210</div>
<div class="t" style="left:1794.0px;width:40px;text-align:center;top:630px;color:#d8d8d8">225</div>
<div class="t" style="left:1848.3px;width:40px;text-align:center;top:630px;color:#d8d8d8">240</div>
<div class="a" style="left:991px;top:672px;width:9px;height:290px;background:#222"></div><div class="a" style="left:1905px;top:672px;width:9px;height:290px;background:#222"></div><div class="a" style="left:1000px;top:654px;width:905px;height:16px;background:#464646"></div>
<div class="a" style="left:995px;top:653px;width:5px;height:18px;background:#6fc3a8;border-radius:1px"></div><div class="a" style="left:1905px;top:653px;width:5px;height:18px;background:#6fc3a8;border-radius:1px"></div>
<div class="a" style="left:1000px;top:674px;width:905px;height:18px;background:repeating-linear-gradient(139.4deg,#69cc93 0,#69cc93 10.6px,#8af2b6 11.2px,#75e0a3 12px,#75e0a3 22px,#8af2b6 22.8px,#69cc93 23.4px)"></div>
<div class="t" style="left:1008px;top:674px;color:#1e1e1e;letter-spacing:-0.35px">Color Array</div>
<div class="a" style="left:1000px;top:696px;width:905px;height:18px;background:repeating-linear-gradient(139.4deg,#b9d86e 0,#b9d86e 10.6px,#dcf78c 11.2px,#cdf07c 12px,#cdf07c 22px,#dcf78c 22.8px,#b9d86e 23.4px)"></div>
<div class="t" style="left:1008px;top:696px;color:#1e1e1e">Random [Index]</div>
<div class="a" style="left:1000px;top:718px;width:905px;height:18px;background-color:#fdf593;background-image:repeating-linear-gradient(0deg,#fdf593 0,#fdf593 1px,rgba(253,245,147,0) 1px,rgba(253,245,147,0) 2px),repeating-linear-gradient(90deg,#e6d064 0,#e6d064 1px,rgba(230,208,100,0) 1px,rgba(230,208,100,0) 2px);border:1px solid #fff;border-radius:3px"></div>
<div class="t" style="left:1008px;top:718px;color:#1e1e1e;letter-spacing:-0.9px">Ellipse Shape</div>
<div class="a" style="left:993px;top:964px;width:917px;height:9.5px;background:#4b4b4b;border-radius:5px"></div>
<div class="a" style="left:1266.9px;top:650px;width:2px;height:311px;background:#5a9a88"></div>
<svg style="left:1260.9px;top:643.5px" width="14" height="9" viewBox="0 0 14 9"><path d="M0 0 H14 L7 9 Z" fill="#6fc3a8"/></svg>
<div class="a" style="left:991px;top:976px;width:923px;height:22px;background:#3a3a3a"></div>
<svg style="left:995px;top:980px" width="16" height="15" viewBox="0 0 16 15"><path d="M0 1.5 H14 M0 6 H14" stroke="#e0e0e0" stroke-width="2"/><path d="M0 10.5 H14" stroke="#e0e0e0" stroke-width="2" stroke-dasharray="3 2"/><path d="M16 15 L13.5 15 L16 12.5Z" fill="#5fcfa8"/></svg>
<div class="fld" style="left:1015px;top:978px;width:149px;height:18px;background:#2d2d2d"></div><div class="t" style="left:1017px;top:979px">Default Keyframe Layer</div>
<div class="fld" style="left:1170.5px;top:978px;width:70px;height:18px;background:#2d2d2d"></div><div class="t" style="left:1175px;top:979px;color:#555">F</div><div class="t" style="left:1188px;top:979px">-</div>
<div class="t" style="left:1247px;top:979px">Align:</div>
<div class="a" style="left:1283px;top:978px;width:53px;height:18px;background:#2b2b2b;border-radius:4px;border:1px solid #252525"></div>
<svg style="left:1286.0px;top:981px" width="12" height="12" viewBox="0 0 12 12"><path d="M1 0 V12 M3 4 H7 M3 8 H11" stroke="#dcdcdc" stroke-width="1.2" fill="none" stroke-dasharray="4 1"/></svg>
<div class="a" style="left:1300.5px;top:979px;width:1px;height:16px;background:#3a3a3a"></div>
<svg style="left:1303.5px;top:981px" width="12" height="12" viewBox="0 0 12 12"><path d="M6 0 V12" stroke="#dcdcdc" stroke-width="1.2" fill="none"/><path d="M2 4 H10 M0.5 8 H11.5" stroke="#dcdcdc" stroke-width="1.2" fill="none" stroke-dasharray="3 1.5"/></svg>
<div class="a" style="left:1318.0px;top:979px;width:1px;height:16px;background:#3a3a3a"></div>
<svg style="left:1321.0px;top:981px" width="12" height="12" viewBox="0 0 12 12"><path d="M11 0 V12 M5 4 H9 M1 8 H9" stroke="#dcdcdc" stroke-width="1.2" fill="none" stroke-dasharray="4 1"/></svg>
<div class="btn" style="left:1340.5px;top:978px;width:17px;height:18px;background:#2d2d2d"></div>
<svg style="left:1343px;top:981px" width="12" height="12" viewBox="0 0 12 12"><rect x="0.6" y="0.6" width="10.8" height="10.8" fill="none" stroke="#dcdcdc" stroke-width="1.1" stroke-dasharray="3.6 1.8"/><rect x="4.5" y="4.5" width="3" height="3" fill="#dcdcdc"/></svg>
<div class="btn" style="left:1361px;top:978px;width:31px;height:18px;background:#2d2d2d"></div>
<div class="a" style="left:1380px;top:979px;width:1px;height:16px;background:#3a3a3a"></div>
<svg style="left:1383px;top:983px" width="7" height="8" viewBox="0 0 7 8"><path d="M0.5 0.5 V7.5 L6 4 Z" fill="none" stroke="#8a8a8a" stroke-width="0.9"/></svg>
<svg style="left:1363.5px;top:981px" width="14" height="12" viewBox="0 0 14 12"><g transform="rotate(-38 7 6)"><path d="M3.2 11 V5.5 A3.8 3.8 0 0 1 10.8 5.5 V11" fill="none" stroke="#c8c8c8" stroke-width="2.3"/><path d="M2.05 9.3 h2.3 v1.9 h-2.3 Z M9.65 9.3 h2.3 v1.9 h-2.3 Z" fill="#fff"/></g></svg>
<div class="btn" style="left:1396px;top:978px;width:31px;height:18px;background:#2d2d2d"></div>
<div class="a" style="left:1415px;top:979px;width:1px;height:16px;background:#3a3a3a"></div>
<svg style="left:1418px;top:983px" width="7" height="8" viewBox="0 0 7 8"><path d="M0.5 0.5 V7.5 L6 4 Z" fill="none" stroke="#8a8a8a" stroke-width="0.9"/></svg>
<svg style="left:1398.5px;top:981px" width="15" height="12" viewBox="0 0 15 12"><path d="M0 6 H15 M3 4.5 V7.5 M5.5 3 V9 M7.5 0 V12 M9.5 3 V9 M12 4.5 V7.5" stroke="#dcdcdc" stroke-width="1" fill="none"/></svg>
<svg style="left:1743px;top:980px" width="14" height="14" viewBox="0 0 14 14"><circle cx="6" cy="6" r="5" fill="none" stroke="#ccc" stroke-width="1.1"/><path d="M9.8 9.8 L13.5 13.5" stroke="#ccc" stroke-width="1.6"/><path d="M3.5 6 H8.5 " stroke="#ccc" stroke-width="1.1"/></svg>
<div class="a" style="left:1767px;top:985px;width:115px;height:4px;background:#4a4a4a;border-radius:2px"></div>
<div class="a" style="left:1762px;top:982px;width:10px;height:10px;background:#7fd1b9;border-radius:5px"></div><div class="a" style="left:1765px;top:985px;width:4px;height:4px;background:#4f9a86;border-radius:2px"></div>
<svg style="left:1887px;top:980px" width="14" height="14" viewBox="0 0 14 14"><circle cx="6" cy="6" r="5" fill="none" stroke="#ccc" stroke-width="1.1"/><path d="M9.8 9.8 L13.5 13.5" stroke="#ccc" stroke-width="1.6"/><path d="M3.5 6 H8.5 M6 3.5 V8.5" stroke="#ccc" stroke-width="1.1"/></svg>
<svg style="left:0;top:0" width="1920" height="1030" viewBox="0 0 1920 1030"><rect x="1281" y="977" width="150" height="20.5" fill="#3a3a3a"/><rect x="1283.9" y="978.6" width="52.4" height="16.8" rx="3.5" fill="#2a2a2a" stroke="#242424" stroke-width="0.8"/><path d="M1301.4 979.5 V994.5 M1318.8 979.5 V994.5" stroke="#3a3a3a" stroke-width="0.8"/><path d="M1286.4 980 V994 M1310.4 980 V994 M1333.7 980 V994" stroke="#dcdcdc" stroke-width="0.9"/><rect x="1288.9" y="982.9" width="2.4" height="2.2" fill="#66d9b8"/><rect x="1292" y="983.1" width="3.3" height="1.8" fill="#dcdcdc"/><rect x="1288.9" y="988.9" width="2.4" height="2.2" fill="#66d9b8"/><rect x="1292" y="989.1" width="7.0" height="1.8" fill="#dcdcdc"/><rect x="1307" y="983.1" width="1.5" height="1.8" fill="#dcdcdc"/><rect x="1309.2" y="982.9" width="2.6" height="2.2" fill="#66d9b8"/><rect x="1312.7" y="983.1" width="1.5" height="1.8" fill="#dcdcdc"/><rect x="1305" y="989.1" width="3.0" height="1.8" fill="#dcdcdc"/><rect x="1309.2" y="988.9" width="2.6" height="2.2" fill="#66d9b8"/><rect x="1313" y="989.1" width="3.0" height="1.8" fill="#dcdcdc"/><rect x="1325" y="983.1" width="3.0" height="1.8" fill="#dcdcdc"/><rect x="1328.8" y="982.9" width="2.6" height="2.2" fill="#66d9b8"/><rect x="1321" y="989.1" width="7.0" height="1.8" fill="#dcdcdc"/><rect x="1328.8" y="988.9" width="2.6" height="2.2" fill="#66d9b8"/><rect x="1340.6" y="978.6" width="16.6" height="16.8" rx="3.5" fill="#2a2a2a" stroke="#242424" stroke-width="0.8"/><path d="M1344.5 981.5 H1353.5 M1344.5 992.5 H1353.5 M1343.4 982.6 V991.4 M1354.6 982.6 V991.4" stroke="#999" stroke-width="0.9" fill="none"/><rect x="1342.4" y="980.5" width="2" height="2" fill="#999"/><rect x="1342.4" y="991.5" width="2" height="2" fill="#999"/><rect x="1353.6" y="980.5" width="2" height="2" fill="#999"/><rect x="1353.6" y="991.5" width="2" height="2" fill="#999"/><rect x="1348" y="986" width="2" height="2" fill="#ccc"/><rect x="1361.5" y="978.2" width="30.3" height="17.6" rx="3.5" fill="#2a2a2a" stroke="#242424" stroke-width="0.8"/><path d="M1365.0 978.6 H1379.5 V995.4 H1365.0 Q1361.9 995.4 1361.9 992 V982 Q1361.9 978.6 1365.0 978.6 Z" fill="#3c3c3c"/><path d="M1383.5 984 V990 L1388.2 987 Z" fill="none" stroke="#777" stroke-width="0.8"/><g transform="translate(1363.8 981) rotate(-38 7 6)"><path d="M3.2 11 V5.5 A3.8 3.8 0 0 1 10.8 5.5 V11" fill="none" stroke="#c8c8c8" stroke-width="2.2"/><path d="M2.1 9.3 h2.2 v1.9 h-2.2 Z M9.7 9.3 h2.2 v1.9 h-2.2 Z" fill="#fff"/></g><rect x="1396.4" y="978.2" width="30.5" height="17.6" rx="3.5" fill="#2a2a2a" stroke="#242424" stroke-width="0.8"/><path d="M1399.9 978.6 H1414.5 V995.4 H1399.9 Q1396.8000000000002 995.4 1396.8000000000002 992 V982 Q1396.8000000000002 978.6 1399.9 978.6 Z" fill="#3c3c3c"/><path d="M1418.5 984 V990 L1423.3 987 Z" fill="none" stroke="#777" stroke-width="0.8"/><path d="M1399 987 H1402 M1404 981 V993 M1407 984.5 V989.5 M1409 987 H1413" stroke="#dcdcdc" stroke-width="1" fill="none"/></svg>

<div class="a" style="left:494px;top:1004px;width:1420px;height:22px;background:#3a3a3a"></div>
<svg style="left:497px;top:1009px" width="3" height="13" viewBox="0 0 3 13"><g fill="#777"><rect x="0.5" y="1" width="2" height="2"/><rect x="0.5" y="5.5" width="2" height="2"/><rect x="0.5" y="10" width="2" height="2"/></g></svg>
<div class="btn" style="left:507px;top:1006px;width:18px;height:18px;background:#2d2d2d"></div>
<svg style="left:509px;top:1008px" width="15" height="15" viewBox="0 0 15 15"><path d="M0.5 0.5 H12.5 V9.5 H11 V12.5 L8 9.5 H0.5 Z" fill="#ececec"/><path d="M2 2.8 H11 M2 5 H11 M2 7.2 H11 M4.2 1.8 V8.2" stroke="#3a3a3a" stroke-width="0.8"/><path d="M15 15 L12.5 15 L15 12.5Z" fill="#5fcfa8"/></svg>
<div class="a" style="left:528px;top:1008px;width:18px;height:14px;background:#e07878;border-radius:2px"></div><div class="t" style="left:528px;width:18px;text-align:center;top:1006px;color:#8a2a2a;font-size:12px">0</div>
<div class="a" style="left:554px;top:1012.2px;width:6px;height:6px;background:#e57373;border-radius:3px"></div>
<div class="t" style="left:565px;top:1007px">Save reminder: 57 minutes since your last save.</div>
<div class="a" style="left:1610px;top:1006px;width:80px;height:17px;background:#d9bf60;border-radius:2px"></div><div class="t" style="left:1615px;top:1007px;color:#222">Feedback</div>
<svg style="left:1671px;top:1008px" width="13" height="13" viewBox="0 0 13 13"><path d="M1.5 0.5 H9 V12.5 H1.5 Z" fill="#f4f4f4"/><path d="M3 3 H7.5 M3 5 H7.5 M3 7 H6" stroke="#aaa" stroke-width="0.8"/><path d="M5 10 L11 3.5 L12.5 5 L6.5 11.5 L4.5 12 Z" fill="#e85a4a"/></svg>
<div class="a" style="left:1693px;top:1006px;width:109px;height:17px;background:#2fcf6f;border-radius:2px"></div><div class="t" style="left:1698px;top:1007px;color:#1a3a24">Upgrade to Pro</div>
<svg style="left:1781px;top:1009px" width="14" height="11" viewBox="0 0 14 11"><path d="M1 4 Q1 1 3.5 1 Q6 1 6 4 V10 H1 Z M8 4 Q8 1 10.5 1 Q13 1 13 4 V10 H8 Z" fill="#f2c84a"/></svg>
<div class="a" style="left:1805px;top:1006px;width:106px;height:17px;background:#3aa0f0;border-radius:2px"></div><div class="t" style="left:1810px;top:1007px;color:#10283c">Tips and Tricks</div>
<svg style="left:1891px;top:1008px" width="14" height="13" viewBox="0 0 14 13"><path d="M13.5 0.5 Q8 0.5 4.5 5.5 L8 9 Q13 5.5 13.5 0.5 Z" fill="#f0f0f0"/><circle cx="9.5" cy="4.5" r="1.3" fill="#e85a4a"/><path d="M4.5 5.5 L1.5 6 L3.5 8 M8 9 L7.5 12 L5.5 10 M4 9.5 L1 12.5" stroke="#e85a4a" stroke-width="1.3" fill="none"/></svg>

<div class="a" style="left:161px;top:379px;width:127px;height:32px;border:3px solid #b5e61d"></div>
<div class="a" style="left:532px;top:668.3px;width:445px;height:30.6px;border:3.4px solid #b5e61d"></div>
<svg style="left:0;top:0" width="1920" height="1030" viewBox="0 0 1920 1030"><path d="M320.5 442 L349.5 430 V435.5 H378.5 V448.5 H349.5 V454.5 Z" fill="none" stroke="#b5e61d" stroke-width="3" stroke-linejoin="miter"/><path d="M238.3 391 C599.5 391 599.5 683 961 683" fill="none" stroke="#2d9be0" stroke-width="1.2"/><circle cx="238.3" cy="391" r="4.5" fill="#42a5f0"/><circle cx="961" cy="683" r="4.6" fill="#42a5f0"/></svg>

</div></body></html>
